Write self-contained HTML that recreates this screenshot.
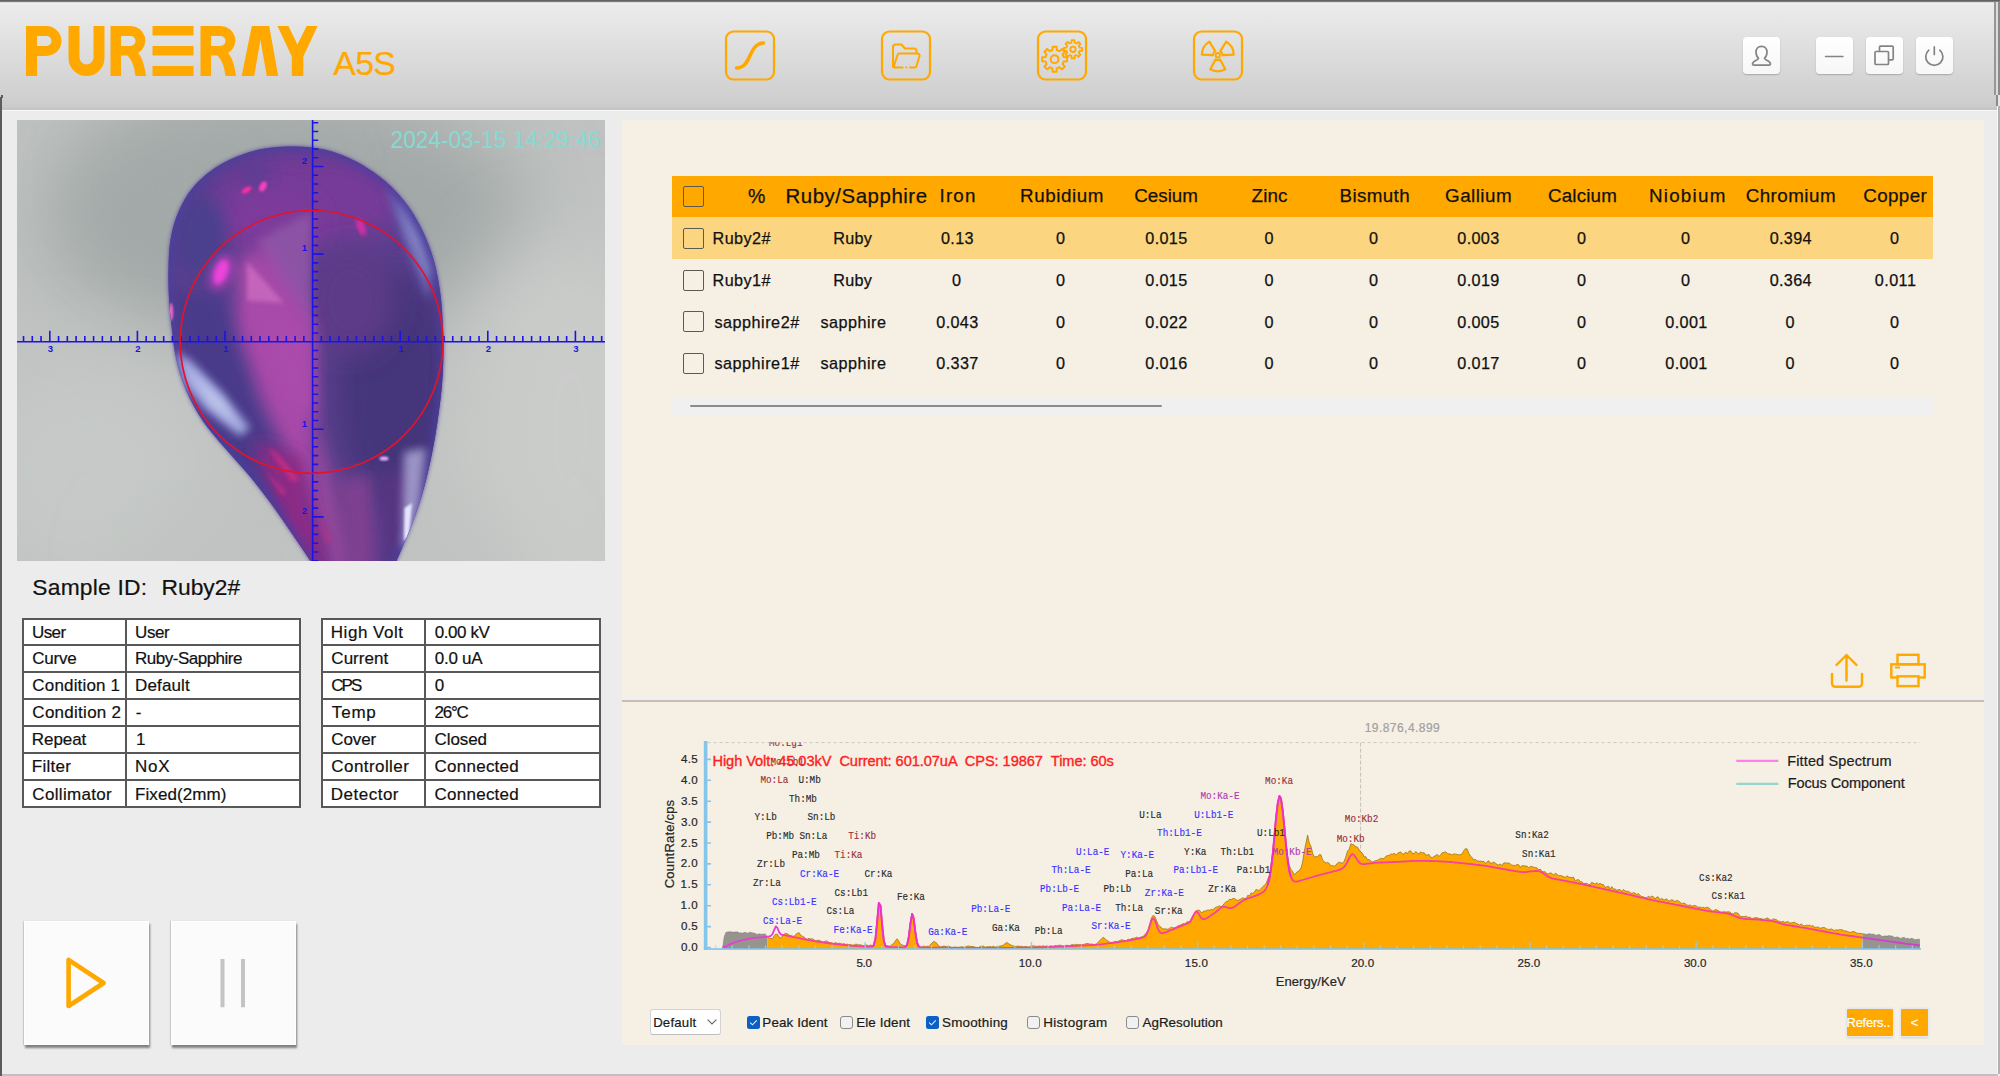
<!DOCTYPE html>
<html><head><meta charset="utf-8"><title>PureRay A5S</title>
<style>
*{box-sizing:border-box;margin:0;padding:0}
html,body{width:2000px;height:1076px;overflow:hidden}
body{position:relative;background:#ececec;font-family:"Liberation Sans",sans-serif;color:#111}
.abs{position:absolute}
.t{position:absolute;white-space:nowrap;line-height:1;-webkit-text-stroke:0.2px}
svg{position:absolute;overflow:visible}
</style></head>
<body>
<div class="abs" style="left:0;top:0;width:2000px;height:110px;background:linear-gradient(#ececec 0px,#e8e8e8 16px,#cecece 102px,#cbcbcb 107px,#c5c5c5 108.5px,#c8c8c8 110px)"></div>
<div class="abs" style="left:2px;top:110px;width:1995px;height:1.3px;background:#f6f6f6"></div>
<div class="abs" style="left:0;top:0;width:2000px;height:4.6px;background:linear-gradient(#606060 0,#646464 1.2px,#a8a8a8 2px,#ececec 2.7px,#f1f1f1 3.4px,#eeeeee 4.6px)"></div>
<div class="abs" style="left:1994.2px;top:2px;width:1.6px;height:93px;background:#969696"></div>
<div class="abs" style="left:1995.8px;top:2px;width:2.3px;height:93px;background:#dcdcdc"></div>
<div class="abs" style="left:1998px;top:2px;width:2px;height:93px;background:#8a8a8a"></div>
<div class="abs" style="left:1995.9px;top:94.5px;width:1.7px;height:11.5px;background:#8c8c8c"></div>
<div class="abs" style="left:1997.6px;top:95px;width:2.4px;height:11px;background:#e6e6e6"></div>
<div class="abs" style="left:1997px;top:106px;width:1.4px;height:968px;background:#f7f7f7"></div>
<div class="abs" style="left:1998.3px;top:106px;width:1.7px;height:968px;background:#b2b2b2"></div>
<div class="abs" style="left:0;top:97px;width:1.8px;height:979px;background:#5c5c5c"></div>
<div class="abs" style="left:1px;top:95px;width:2px;height:2.5px;background:#5c5c5c"></div>
<div class="abs" style="left:1.8px;top:1073.8px;width:1996px;height:2.2px;background:#c0c0c0"></div>
<svg style="left:0;top:0" width="420" height="110" viewBox="0 0 420 110"><g fill="#ffa800"><path fill-rule="evenodd" d="M26 26 H46 A15.5 15 0 0 1 46 56 H37 V76 H26 Z M37 36 V46 H46.5 A5 5 0 0 0 46.5 36 Z"/><path d="M68.5 26 H79.5 V57.5 A7 7 0 0 0 93.5 57.5 V26 H104.5 V58 A18 18 0 0 1 68.5 58 Z"/><path fill-rule="evenodd" d="M110.5 26 H130.5 A15 14.5 0 0 1 138.0 53 Q143.5 58 146.0 76 H135.5 Q134.0 62 127.5 55.5 H121.0 V76 H110.5 Z M121.0 36 V46 H130.5 A5 5 0 0 0 130.5 36 Z"/><rect x="152.5" y="26" width="41" height="9.5"/><rect x="152.5" y="46" width="41" height="9.5"/><rect x="152.5" y="66" width="41" height="10"/><path fill-rule="evenodd" d="M200.5 26 H220.5 A15 14.5 0 0 1 228.0 53 Q233.5 58 236.0 76 H225.5 Q224.0 62 217.5 55.5 H211.0 V76 H200.5 Z M211.0 36 V46 H220.5 A5 5 0 0 0 220.5 36 Z"/><path d="M241.7 76 L251.8 26 H269.2 L278.2 76 H266.8 L260.4 40 L254.2 76 Z"/><path d="M277.5 26 H288.4 L297.4 44.5 L306.6 26 H317.6 L303.3 56.5 V76 H291.8 V56.5 Z"/></g></svg>
<div class="t" style="left:333.2px;top:46.6px;font-size:33.8px;letter-spacing:-0.6px;color:#ffa800">A5S</div>
<svg style="left:0;top:0" width="2000" height="110" viewBox="0 0 2000 110"><rect x="726" y="31.5" width="48" height="48" rx="7.5" fill="none" stroke="#ffa800" stroke-width="2.2"/><rect x="882" y="31.5" width="48" height="48" rx="7.5" fill="none" stroke="#ffa800" stroke-width="2.2"/><rect x="1038" y="31.5" width="48" height="48" rx="7.5" fill="none" stroke="#ffa800" stroke-width="2.2"/><rect x="1194" y="31.5" width="48" height="48" rx="7.5" fill="none" stroke="#ffa800" stroke-width="2.2"/><path d="M736.5 68 C752 68 748 43.5 763.5 43" fill="none" stroke="#ffa800" stroke-width="3.6" stroke-linecap="round"/><path d="M893 67.5 V47 A2.5 2.5 0 0 1 895.5 44.5 H901.5 L905 48.5 H914 A2.5 2.5 0 0 1 916.5 51 V53.5" fill="none" stroke="#ffa800" stroke-width="2" stroke-linejoin="round"/><path d="M893.5 67.5 L897.5 55 A2 2 0 0 1 899.5 53.5 H917.5 A2 2 0 0 1 919.5 56 L916.5 66 A2 2 0 0 1 914.5 67.5 H910 M902.5 67.5 H896 A3 3 0 0 1 893 65" fill="none" stroke="#ffa800" stroke-width="2" stroke-linejoin="round" stroke-linecap="round"/><circle cx="906.3" cy="67.5" r="1" fill="#ffa800"/><path d="M1063.74 57.01 L1067.04 57.23 L1067.04 61.17 L1063.74 61.39 L1062.61 64.11 L1064.79 66.61 L1062.01 69.39 L1059.51 67.21 L1056.79 68.34 L1056.57 71.64 L1052.63 71.64 L1052.41 68.34 L1049.69 67.21 L1047.19 69.39 L1044.41 66.61 L1046.59 64.11 L1045.46 61.39 L1042.16 61.17 L1042.16 57.23 L1045.46 57.01 L1046.59 54.29 L1044.41 51.79 L1047.19 49.01 L1049.69 51.19 L1052.41 50.06 L1052.63 46.76 L1056.57 46.76 L1056.79 50.06 L1059.51 51.19 L1062.01 49.01 L1064.79 51.79 L1062.61 54.29Z" fill="none" stroke="#ffa800" stroke-width="2.0" stroke-linejoin="round"/><circle cx="1054.60" cy="59.20" r="3.90" fill="none" stroke="#ffa800" stroke-width="2.0"/><path d="M1079.61 47.71 L1082.09 47.86 L1082.09 50.74 L1079.61 50.89 L1078.80 52.85 L1080.44 54.71 L1078.41 56.74 L1076.55 55.10 L1074.59 55.91 L1074.44 58.39 L1071.56 58.39 L1071.41 55.91 L1069.45 55.10 L1067.59 56.74 L1065.56 54.71 L1067.20 52.85 L1066.39 50.89 L1063.91 50.74 L1063.91 47.86 L1066.39 47.71 L1067.20 45.75 L1065.56 43.89 L1067.59 41.86 L1069.45 43.50 L1071.41 42.69 L1071.56 40.21 L1074.44 40.21 L1074.59 42.69 L1076.55 43.50 L1078.41 41.86 L1080.44 43.89 L1078.80 45.75Z" fill="none" stroke="#ffa800" stroke-width="1.8" stroke-linejoin="round"/><circle cx="1073.00" cy="49.30" r="2.70" fill="none" stroke="#ffa800" stroke-width="1.8"/><path d="M1213.00 55.03 L1201.81 54.64 A16.00 16.00 0 0 1 1209.32 41.63 L1215.26 51.13 A4.80 4.80 0 0 0 1213.00 55.03 Z" fill="none" stroke="#ffa800" stroke-width="2.2" stroke-linejoin="round"/><path d="M1220.34 51.13 L1226.28 41.63 A16.00 16.00 0 0 1 1233.79 54.64 L1222.60 55.03 A4.80 4.80 0 0 0 1220.34 51.13 Z" fill="none" stroke="#ffa800" stroke-width="2.2" stroke-linejoin="round"/><path d="M1220.05 59.44 L1225.31 69.33 A16.00 16.00 0 0 1 1210.29 69.33 L1215.55 59.44 A4.80 4.80 0 0 0 1220.05 59.44 Z" fill="none" stroke="#ffa800" stroke-width="2.2" stroke-linejoin="round"/><circle cx="1217.8" cy="55.2" r="2.2" fill="none" stroke="#ffa800" stroke-width="1.9"/></svg>
<div class="abs" style="left:1742.7px;top:37.3px;width:37px;height:37px;border-radius:4px;background:linear-gradient(#ffffff,#f7f7f7);box-shadow:0 1px 1.5px rgba(0,0,0,0.22)"></div>
<div class="abs" style="left:1815.7px;top:37.3px;width:37px;height:37px;border-radius:4px;background:linear-gradient(#ffffff,#f7f7f7);box-shadow:0 1px 1.5px rgba(0,0,0,0.22)"></div>
<div class="abs" style="left:1865.7px;top:37.3px;width:37px;height:37px;border-radius:4px;background:linear-gradient(#ffffff,#f7f7f7);box-shadow:0 1px 1.5px rgba(0,0,0,0.22)"></div>
<div class="abs" style="left:1915.7px;top:37.3px;width:37px;height:37px;border-radius:4px;background:linear-gradient(#ffffff,#f7f7f7);box-shadow:0 1px 1.5px rgba(0,0,0,0.22)"></div>
<svg style="left:0;top:0" width="2000" height="110" viewBox="0 0 2000 110" fill="none" stroke="#848484" stroke-width="1.7" stroke-linecap="round" stroke-linejoin="round"><path d="M1761.5 46.3 C1765.2 46.3 1767 49 1767 52 C1767 55 1765.8 57.2 1764.4 58.3 C1764.4 60.2 1770.5 60.6 1770.5 64 Q1770.5 65.2 1769 65.2 H1754 Q1752.5 65.2 1752.5 64 C1752.5 60.6 1758.6 60.2 1758.6 58.3 C1757.2 57.2 1756 55 1756 52 C1756 49 1757.8 46.3 1761.5 46.3 Z"/><path d="M1825.5 56.4 H1843" stroke-width="1.5"/><rect x="1875" y="51.5" width="13.5" height="13" rx="1"/><path d="M1879.5 51 V47.2 Q1879.5 46.2 1880.5 46.2 H1892.2 Q1893.2 46.2 1893.2 47.2 V58.8 Q1893.2 59.8 1892.2 59.8 H1889"/><path d="M1934.3 46.9 V54.4"/><path d="M1928.8 50.2 A8.6 8.6 0 1 0 1939.8 50.2"/></svg>
<svg style="left:17px;top:120px;overflow:hidden" width="588" height="441" viewBox="17 120 588 441"><defs>
<filter id="b1" x="-20%" y="-20%" width="140%" height="140%"><feGaussianBlur stdDeviation="1.2"/></filter>
<filter id="b2" x="-20%" y="-20%" width="140%" height="140%"><feGaussianBlur stdDeviation="2.2"/></filter>
<filter id="b4" x="-30%" y="-30%" width="160%" height="160%"><feGaussianBlur stdDeviation="4"/></filter>
<filter id="b8" x="-40%" y="-40%" width="180%" height="180%"><feGaussianBlur stdDeviation="8"/></filter>
<filter id="b14" x="-50%" y="-50%" width="200%" height="200%"><feGaussianBlur stdDeviation="14"/></filter>
<filter id="b40" x="-60%" y="-60%" width="220%" height="220%"><feGaussianBlur stdDeviation="40"/></filter>
<linearGradient id="gbg" x1="0" y1="0" x2="1" y2="1">
<stop offset="0" stop-color="#a7acab"/><stop offset="0.5" stop-color="#b6bab9"/><stop offset="1" stop-color="#c6c8c6"/></linearGradient>
<clipPath id="gemclip"><path id="gemp" d="M291.3 146.6 C302.9 146.4 313.4 147.2 324.0 149.6 C334.6 152.0 344.8 155.8 355.0 161.0 C365.2 166.2 376.2 173.5 385.0 181.0 C393.8 188.5 401.5 197.2 408.0 206.0 C414.5 214.8 419.6 224.5 424.0 234.0 C428.4 243.5 431.8 252.8 434.5 263.0 C437.2 273.2 439.1 283.8 440.5 295.0 C441.9 306.2 442.6 318.8 443.0 330.0 C443.4 341.2 443.5 351.3 443.2 362.0 C442.9 372.7 442.3 382.0 441.0 394.0 C439.7 406.0 437.8 420.3 435.5 434.0 C433.2 447.7 430.2 462.8 427.0 476.0 C423.8 489.2 420.2 501.0 416.0 513.0 C411.8 525.0 406.2 537.8 402.0 548.0 C397.8 558.2 393.7 567.0 391.0 574.0 C388.3 581.0 396.2 587.3 386.0 590.0 C375.8 592.7 341.0 592.7 330.0 590.0 C319.0 587.3 323.3 579.0 320.0 574.0 C316.7 569.0 314.8 567.0 310.0 560.0 C305.2 553.0 297.7 541.7 291.0 532.0 C284.3 522.3 277.2 511.7 270.0 502.0 C262.8 492.3 255.5 483.0 248.0 474.0 C240.5 465.0 232.5 456.8 225.0 448.0 C217.5 439.2 209.4 430.5 203.0 421.0 C196.6 411.5 190.9 401.2 186.5 391.0 C182.1 380.8 178.9 370.2 176.5 360.0 C174.1 349.8 173.2 340.3 172.0 330.0 C170.8 319.7 169.6 308.3 169.0 298.0 C168.4 287.7 168.2 277.7 168.5 268.0 C168.8 258.3 168.9 249.2 170.5 240.0 C172.1 230.8 174.2 221.8 178.0 213.0 C181.8 204.2 186.2 195.4 193.0 187.5 C199.8 179.6 208.8 171.6 219.0 165.5 C229.2 159.4 242.4 153.8 254.5 150.7 C266.6 147.5 279.7 146.8 291.3 146.6Z"/></clipPath>
</defs><rect x="17" y="120" width="588" height="441" fill="#bfc2c0"/><ellipse cx="285" cy="215" rx="240" ry="125" fill="#a2a8a7" filter="url(#b40)"/><ellipse cx="200" cy="190" rx="110" ry="70" fill="#a4aaa9" filter="url(#b40)" opacity="0.6"/><ellipse cx="85" cy="470" rx="120" ry="110" fill="#c6c9c7" filter="url(#b40)"/><ellipse cx="570" cy="430" rx="110" ry="190" fill="#caccca" filter="url(#b40)"/><ellipse cx="330" cy="560" rx="200" ry="40" fill="#c0c3c1" filter="url(#b40)"/><use href="#gemp" fill="#5646a0" filter="url(#b2)"/><g clip-path="url(#gemclip)"><rect x="150" y="130" width="320" height="450" fill="#5a3f8e"/><ellipse cx="310" cy="200" rx="95" ry="48" fill="#763a98" filter="url(#b14)"/><ellipse cx="270" cy="225" rx="50" ry="30" fill="#7e3b9b" filter="url(#b14)"/><ellipse cx="255" cy="175" rx="14" ry="9" fill="#4f3f90" filter="url(#b8)" opacity="0.8"/><ellipse cx="200" cy="238" rx="26" ry="40" fill="#4b3f8d" filter="url(#b8)"/><ellipse cx="395" cy="390" rx="58" ry="120" fill="#45347a" filter="url(#b14)"/><ellipse cx="350" cy="300" rx="45" ry="55" fill="#5d3b88" filter="url(#b14)"/><path d="M385 185 L412 212 L436 270 L428 300 L404 240 Z" fill="#6a62b4" filter="url(#b4)"/><path d="M396 200 L420 236 L432 272 L426 276 L408 236 Z" fill="#8b90c6" filter="url(#b4)" opacity="0.8"/><path d="M170 290 L222 296 L262 420 L312 520 L325 572 L300 572 L200 420 Z" fill="#4a3a8a" filter="url(#b8)"/><path d="M258 240 L311 212 L312 334 L282 306 Z" fill="#8c52a4" filter="url(#b4)"/><path d="M236 262 L262 246 L312 320 L314 440 L322 540 L296 470 L262 400 L238 330 Z" fill="#a748a8" filter="url(#b8)"/><path d="M247 262 L284 303 L247 301 Z" fill="#c465bb" filter="url(#b2)"/><path d="M250 305 L312 330 L314 420 L285 400 Z" fill="#aa4cac" filter="url(#b8)"/><path d="M314 420 L330 470 L352 540 L360 572 L330 572 L312 500 Z" fill="#94489c" filter="url(#b8)"/><path d="M252 440 L300 455 L330 572 L300 572 Z" fill="#8c2c86" filter="url(#b8)"/><path d="M335 480 L372 474 L378 572 L345 572 Z" fill="#7e4090" filter="url(#b8)"/><path d="M380 470 L420 470 L400 572 L382 572 Z" fill="#573582" filter="url(#b8)"/><path d="M268 448 L276 452 L300 480 L292 482 Z" fill="#d02f86" filter="url(#b2)" opacity="0.8"/><path d="M264 470 L286 492 L282 496 Z" fill="#d02f86" filter="url(#b2)" opacity="0.7"/><path d="M318 515 L332 540 L326 544 Z" fill="#c02f86" filter="url(#b2)" opacity="0.6"/><use href="#gemp" fill="none" stroke="#4a40a2" stroke-width="8" filter="url(#b4)" opacity="0.8"/><ellipse cx="221" cy="272" rx="6" ry="12.5" fill="#ff4aea" transform="rotate(20 221 272)" filter="url(#b2)"/><ellipse cx="221" cy="272" rx="11" ry="19" fill="#e040d0" transform="rotate(20 221 272)" filter="url(#b4)" opacity="0.55"/><ellipse cx="246.5" cy="190" rx="5.5" ry="2.6" fill="#ff2ea4" transform="rotate(-32 246.5 190)" filter="url(#b1)"/><ellipse cx="263" cy="186.5" rx="3.2" ry="5.5" fill="#f840c0" transform="rotate(28 263 186.5)" filter="url(#b1)"/><ellipse cx="361" cy="227" rx="3.5" ry="9" fill="#e62ca8" transform="rotate(-22 361 227)" filter="url(#b2)"/><ellipse cx="384" cy="458.5" rx="4.5" ry="2" fill="#e6b4ff" filter="url(#b1)"/><ellipse cx="171" cy="312" rx="2.2" ry="9" fill="#ff70c8" filter="url(#b1)" opacity="0.9"/><path d="M175 352 L190 360 L222 392 L250 428 L240 436 L206 410 L184 384 Z" fill="#b2bcf0" filter="url(#b4)" opacity="0.85"/><path d="M186 366 L224 402 L238 426 L210 404 Z" fill="#d4def0" filter="url(#b4)" opacity="0.55"/><path d="M404 452 L426 448 L420 500 L410 545 L402 548 Z" fill="#a9a4d2" filter="url(#b4)" opacity="0.85"/><path d="M404.5 508 L412 503 L409 536 L404 541 Z" fill="#e4e4ff" filter="url(#b1)"/></g><path d="M17 341.7 H605 M312.6 120 V561 M23.52 341.7 v-5.6 M32.28 341.7 v-5.6 M41.04 341.7 v-5.6 M49.80 341.7 v-11 M58.56 341.7 v-5.6 M67.32 341.7 v-5.6 M76.08 341.7 v-5.6 M84.84 341.7 v-5.6 M93.60 341.7 v-5.6 M102.36 341.7 v-5.6 M111.12 341.7 v-5.6 M119.88 341.7 v-5.6 M128.64 341.7 v-5.6 M137.40 341.7 v-11 M146.16 341.7 v-5.6 M154.92 341.7 v-5.6 M163.68 341.7 v-5.6 M172.44 341.7 v-5.6 M181.20 341.7 v-5.6 M189.96 341.7 v-5.6 M198.72 341.7 v-5.6 M207.48 341.7 v-5.6 M216.24 341.7 v-5.6 M225.00 341.7 v-11 M233.76 341.7 v-5.6 M242.52 341.7 v-5.6 M251.28 341.7 v-5.6 M260.04 341.7 v-5.6 M268.80 341.7 v-5.6 M277.56 341.7 v-5.6 M286.32 341.7 v-5.6 M295.08 341.7 v-5.6 M303.84 341.7 v-5.6 M321.36 341.7 v-5.6 M330.12 341.7 v-5.6 M338.88 341.7 v-5.6 M347.64 341.7 v-5.6 M356.40 341.7 v-5.6 M365.16 341.7 v-5.6 M373.92 341.7 v-5.6 M382.68 341.7 v-5.6 M391.44 341.7 v-5.6 M400.20 341.7 v-11 M408.96 341.7 v-5.6 M417.72 341.7 v-5.6 M426.48 341.7 v-5.6 M435.24 341.7 v-5.6 M444.00 341.7 v-5.6 M452.76 341.7 v-5.6 M461.52 341.7 v-5.6 M470.28 341.7 v-5.6 M479.04 341.7 v-5.6 M487.80 341.7 v-11 M496.56 341.7 v-5.6 M505.32 341.7 v-5.6 M514.08 341.7 v-5.6 M522.84 341.7 v-5.6 M531.60 341.7 v-5.6 M540.36 341.7 v-5.6 M549.12 341.7 v-5.6 M557.88 341.7 v-5.6 M566.64 341.7 v-5.6 M575.40 341.7 v-11 M584.16 341.7 v-5.6 M592.92 341.7 v-5.6 M601.68 341.7 v-5.6 M312.6 122.70 h5.6 M312.6 131.46 h5.6 M312.6 140.22 h5.6 M312.6 148.98 h5.6 M312.6 157.74 h5.6 M312.6 166.50 h11 M312.6 175.26 h5.6 M312.6 184.02 h5.6 M312.6 192.78 h5.6 M312.6 201.54 h5.6 M312.6 210.30 h5.6 M312.6 219.06 h5.6 M312.6 227.82 h5.6 M312.6 236.58 h5.6 M312.6 245.34 h5.6 M312.6 254.10 h11 M312.6 262.86 h5.6 M312.6 271.62 h5.6 M312.6 280.38 h5.6 M312.6 289.14 h5.6 M312.6 297.90 h5.6 M312.6 306.66 h5.6 M312.6 315.42 h5.6 M312.6 324.18 h5.6 M312.6 332.94 h5.6 M312.6 350.46 h5.6 M312.6 359.22 h5.6 M312.6 367.98 h5.6 M312.6 376.74 h5.6 M312.6 385.50 h5.6 M312.6 394.26 h5.6 M312.6 403.02 h5.6 M312.6 411.78 h5.6 M312.6 420.54 h5.6 M312.6 429.30 h11 M312.6 438.06 h5.6 M312.6 446.82 h5.6 M312.6 455.58 h5.6 M312.6 464.34 h5.6 M312.6 473.10 h5.6 M312.6 481.86 h5.6 M312.6 490.62 h5.6 M312.6 499.38 h5.6 M312.6 508.14 h5.6 M312.6 516.90 h11 M312.6 525.66 h5.6 M312.6 534.42 h5.6 M312.6 543.18 h5.6 M312.6 551.94 h5.6 M312.6 560.70 h5.6" stroke="#1a14e4" stroke-width="1.6" fill="none"/><text x="50.4" y="351.6" font-size="9.6" font-weight="bold" fill="#1a14e4" text-anchor="middle" font-family="Liberation Sans">3</text><text x="138.0" y="351.6" font-size="9.6" font-weight="bold" fill="#1a14e4" text-anchor="middle" font-family="Liberation Sans">2</text><text x="225.6" y="351.6" font-size="9.6" font-weight="bold" fill="#1a14e4" text-anchor="middle" font-family="Liberation Sans">1</text><text x="400.8" y="351.6" font-size="9.6" font-weight="bold" fill="#1a14e4" text-anchor="middle" font-family="Liberation Sans">1</text><text x="488.4" y="351.6" font-size="9.6" font-weight="bold" fill="#1a14e4" text-anchor="middle" font-family="Liberation Sans">2</text><text x="576.0" y="351.6" font-size="9.6" font-weight="bold" fill="#1a14e4" text-anchor="middle" font-family="Liberation Sans">3</text><text x="304.5" y="163.7" font-size="9.6" font-weight="bold" fill="#1a14e4" text-anchor="middle" font-family="Liberation Sans">2</text><text x="304.5" y="251.3" font-size="9.6" font-weight="bold" fill="#1a14e4" text-anchor="middle" font-family="Liberation Sans">1</text><text x="304.5" y="426.5" font-size="9.6" font-weight="bold" fill="#1a14e4" text-anchor="middle" font-family="Liberation Sans">1</text><text x="304.5" y="514.1" font-size="9.6" font-weight="bold" fill="#1a14e4" text-anchor="middle" font-family="Liberation Sans">2</text><circle cx="311.6" cy="341.9" r="131.4" fill="none" stroke="#e2142c" stroke-width="1.7"/><text x="390.6" y="147.9" font-size="23.6" fill="#86dad2" font-family="Liberation Sans" textLength="210" lengthAdjust="spacingAndGlyphs">2024-03-15 14:29:46</text></svg>
<div class="t" style="left:32.37px;top:574.00px;font-size:22.8px;letter-spacing:0.213px;line-height:26px;">Sample ID:</div>
<div class="t" style="left:161.38px;top:574.00px;font-size:22.8px;letter-spacing:0.056px;line-height:26px;">Ruby2#</div>
<div class="abs" style="left:22.2px;top:618.9px;width:279px;height:188.2px;background:#fff"></div>
<div class="abs" style="left:22.2px;top:617.90px;width:279.0px;height:2px;background:#585858"></div>
<div class="abs" style="left:22.2px;top:643.80px;width:279.0px;height:2px;background:#585858"></div>
<div class="abs" style="left:22.2px;top:670.70px;width:279.0px;height:2px;background:#585858"></div>
<div class="abs" style="left:22.2px;top:697.50px;width:279.0px;height:2px;background:#585858"></div>
<div class="abs" style="left:22.2px;top:724.50px;width:279.0px;height:2px;background:#585858"></div>
<div class="abs" style="left:22.2px;top:751.50px;width:279.0px;height:2px;background:#585858"></div>
<div class="abs" style="left:22.2px;top:778.70px;width:279.0px;height:2px;background:#585858"></div>
<div class="abs" style="left:22.2px;top:806.10px;width:279.0px;height:2px;background:#585858"></div>
<div class="abs" style="left:22.20px;top:617.90px;width:2px;height:190.20px;background:#585858"></div>
<div class="abs" style="left:124.70px;top:617.90px;width:2px;height:190.20px;background:#585858"></div>
<div class="abs" style="left:299.20px;top:617.90px;width:2px;height:190.20px;background:#585858"></div>
<div class="t" style="left:31.93px;top:623.00px;font-size:17px;letter-spacing:-0.542px;line-height:19px;">User</div>
<div class="t" style="left:135.12px;top:623.00px;font-size:17px;letter-spacing:-0.408px;line-height:19px;">User</div>
<div class="t" style="left:32.35px;top:649.00px;font-size:17px;letter-spacing:-0.269px;line-height:19px;">Curve</div>
<div class="t" style="left:135.04px;top:649.00px;font-size:17px;letter-spacing:-0.496px;line-height:19px;">Ruby-Sapphire</div>
<div class="t" style="left:32.35px;top:676.00px;font-size:17px;letter-spacing:0.169px;line-height:19px;">Condition 1</div>
<div class="t" style="left:135.04px;top:676.00px;font-size:17px;letter-spacing:0.142px;line-height:19px;">Default</div>
<div class="t" style="left:32.35px;top:703.00px;font-size:17px;letter-spacing:0.269px;line-height:19px;">Condition 2</div>
<div class="t" style="left:135.72px;top:703.00px;font-size:17px;line-height:19px;">-</div>
<div class="t" style="left:31.84px;top:730.00px;font-size:17px;letter-spacing:-0.076px;line-height:19px;">Repeat</div>
<div class="t" style="left:136.12px;top:730.00px;font-size:17px;line-height:19px;">1</div>
<div class="t" style="left:31.84px;top:757.00px;font-size:17px;letter-spacing:0.258px;line-height:19px;">Filter</div>
<div class="t" style="left:135.04px;top:757.00px;font-size:17px;letter-spacing:0.725px;line-height:19px;">NoX</div>
<div class="t" style="left:32.35px;top:785.00px;font-size:17px;letter-spacing:0.324px;line-height:19px;">Collimator</div>
<div class="t" style="left:135.04px;top:785.00px;font-size:17px;letter-spacing:0.076px;line-height:19px;">Fixed(2mm)</div>
<div class="abs" style="left:321.2px;top:618.9px;width:280px;height:188.2px;background:#fff"></div>
<div class="abs" style="left:321.2px;top:617.90px;width:280.0px;height:2px;background:#585858"></div>
<div class="abs" style="left:321.2px;top:643.80px;width:280.0px;height:2px;background:#585858"></div>
<div class="abs" style="left:321.2px;top:670.70px;width:280.0px;height:2px;background:#585858"></div>
<div class="abs" style="left:321.2px;top:697.50px;width:280.0px;height:2px;background:#585858"></div>
<div class="abs" style="left:321.2px;top:724.50px;width:280.0px;height:2px;background:#585858"></div>
<div class="abs" style="left:321.2px;top:751.50px;width:280.0px;height:2px;background:#585858"></div>
<div class="abs" style="left:321.2px;top:778.70px;width:280.0px;height:2px;background:#585858"></div>
<div class="abs" style="left:321.2px;top:806.10px;width:280.0px;height:2px;background:#585858"></div>
<div class="abs" style="left:321.20px;top:617.90px;width:2px;height:190.20px;background:#585858"></div>
<div class="abs" style="left:423.70px;top:617.90px;width:2px;height:190.20px;background:#585858"></div>
<div class="abs" style="left:599.20px;top:617.90px;width:2px;height:190.20px;background:#585858"></div>
<div class="t" style="left:330.84px;top:623.00px;font-size:17px;letter-spacing:0.520px;line-height:19px;">High Volt</div>
<div class="t" style="left:434.80px;top:623.00px;font-size:17px;letter-spacing:-0.439px;line-height:19px;">0.00 kV</div>
<div class="t" style="left:331.35px;top:649.00px;font-size:17px;letter-spacing:0.023px;line-height:19px;">Current</div>
<div class="t" style="left:434.80px;top:649.00px;font-size:17px;letter-spacing:-0.267px;line-height:19px;">0.0 uA</div>
<div class="t" style="left:331.35px;top:676.00px;font-size:17px;letter-spacing:-2.000px;line-height:19px;">CPS</div>
<div class="t" style="left:434.80px;top:676.00px;font-size:17px;line-height:19px;">0</div>
<div class="t" style="left:331.86px;top:703.00px;font-size:17px;letter-spacing:0.785px;line-height:19px;">Temp</div>
<div class="t" style="left:434.55px;top:703.00px;font-size:17px;letter-spacing:-1.255px;line-height:19px;">26°C</div>
<div class="t" style="left:331.35px;top:730.00px;font-size:17px;letter-spacing:-0.121px;line-height:19px;">Cover</div>
<div class="t" style="left:434.55px;top:730.00px;font-size:17px;letter-spacing:-0.080px;line-height:19px;">Closed</div>
<div class="t" style="left:331.35px;top:757.00px;font-size:17px;letter-spacing:0.423px;line-height:19px;">Controller</div>
<div class="t" style="left:434.55px;top:757.00px;font-size:17px;letter-spacing:0.247px;line-height:19px;">Connected</div>
<div class="t" style="left:330.84px;top:785.00px;font-size:17px;letter-spacing:0.494px;line-height:19px;">Detector</div>
<div class="t" style="left:434.55px;top:785.00px;font-size:17px;letter-spacing:0.247px;line-height:19px;">Connected</div>
<div class="abs" style="left:23.8px;top:921px;width:125px;height:124.3px;background:#fbfbfb;border:1px solid #fff;box-shadow:1px 2.5px 2px rgba(0,0,0,0.45), -1px 0 1px rgba(0,0,0,0.12)"></div>
<div class="abs" style="left:170.8px;top:921px;width:125px;height:124.3px;background:#fbfbfb;border:1px solid #fff;box-shadow:1px 2.5px 2px rgba(0,0,0,0.45), -1px 0 1px rgba(0,0,0,0.12)"></div>
<svg style="left:0;top:900px" width="320" height="160" viewBox="0 900 320 160"><path d="M68.6 959.8 L68.6 1006 L103.6 983 Z" fill="none" stroke="#ffa800" stroke-width="4.6" stroke-linejoin="round"/><path d="M222.5 959 V1007.2 M243 959 V1007.2" stroke="#c4c4c4" stroke-width="4" fill="none"/></svg>
<div class="abs" style="left:621.5px;top:120.2px;width:1362.5px;height:925px;background:#f5efe4"></div>
<div class="abs" style="left:672px;top:175.6px;width:1261px;height:41.4px;background:#ffa800"></div>
<div class="abs" style="left:672px;top:217px;width:1261px;height:41.8px;background:#fbd57f"></div>
<div class="abs" style="left:683px;top:185.6px;width:21px;height:21px;border-radius:2px;border:1.4px solid #5c5a52"></div>
<div class="abs" style="left:683px;top:228.0px;width:21px;height:21px;border-radius:2px;border:1.4px solid #5c5a52"></div>
<div class="abs" style="left:683px;top:269.7px;width:21px;height:21px;border-radius:2px;border:1.4px solid #5c5a52"></div>
<div class="abs" style="left:683px;top:311.2px;width:21px;height:21px;border-radius:2px;border:1.4px solid #5c5a52"></div>
<div class="abs" style="left:683px;top:352.8px;width:21px;height:21px;border-radius:2px;border:1.4px solid #5c5a52"></div>
<div class="t" style="left:748.12px;top:185.00px;font-size:19.5px;line-height:22px;-webkit-text-stroke:0.25px;">%</div>
<div class="t" style="left:785.57px;top:185.00px;font-size:20.4px;letter-spacing:0.550px;line-height:22px;-webkit-text-stroke:0.25px;">Ruby/Sapphire</div>
<div class="t" style="left:939.61px;top:185.00px;font-size:18.8px;letter-spacing:1.128px;line-height:21px;-webkit-text-stroke:0.25px;">Iron</div>
<div class="t" style="left:1020.00px;top:185.00px;font-size:18.8px;letter-spacing:0.585px;line-height:21px;-webkit-text-stroke:0.25px;">Rubidium</div>
<div class="t" style="left:1134.26px;top:185.00px;font-size:18.8px;letter-spacing:0.006px;line-height:21px;-webkit-text-stroke:0.25px;">Cesium</div>
<div class="t" style="left:1251.54px;top:185.00px;font-size:18.8px;letter-spacing:0.167px;line-height:21px;-webkit-text-stroke:0.25px;">Zinc</div>
<div class="t" style="left:1339.50px;top:185.00px;font-size:18.8px;letter-spacing:0.377px;line-height:21px;-webkit-text-stroke:0.25px;">Bismuth</div>
<div class="t" style="left:1445.06px;top:185.00px;font-size:18.8px;letter-spacing:0.472px;line-height:21px;-webkit-text-stroke:0.25px;">Gallium</div>
<div class="t" style="left:1547.96px;top:185.00px;font-size:18.8px;letter-spacing:0.167px;line-height:21px;-webkit-text-stroke:0.25px;">Calcium</div>
<div class="t" style="left:1648.90px;top:185.00px;font-size:18.8px;letter-spacing:1.255px;line-height:21px;-webkit-text-stroke:0.25px;">Niobium</div>
<div class="t" style="left:1745.66px;top:185.00px;font-size:18.8px;letter-spacing:0.471px;line-height:21px;-webkit-text-stroke:0.25px;">Chromium</div>
<div class="t" style="left:1863.26px;top:185.00px;font-size:18.8px;letter-spacing:0.372px;line-height:21px;-webkit-text-stroke:0.25px;">Copper</div>
<div class="t" style="left:712.50px;top:229.00px;font-size:16.2px;letter-spacing:0.437px;line-height:18px;-webkit-text-stroke:0.25px;">Ruby2#</div>
<div class="t" style="left:833.20px;top:229.00px;font-size:16.2px;letter-spacing:0.323px;line-height:18px;-webkit-text-stroke:0.25px;">Ruby</div>
<div class="t" style="left:940.88px;top:229.00px;font-size:16.2px;letter-spacing:0.402px;line-height:18px;-webkit-text-stroke:0.25px;">0.13</div>
<div class="t" style="left:1056.08px;top:229.00px;font-size:16.2px;line-height:18px;-webkit-text-stroke:0.25px;">0</div>
<div class="t" style="left:1145.33px;top:229.00px;font-size:16.2px;letter-spacing:0.329px;line-height:18px;-webkit-text-stroke:0.25px;">0.015</div>
<div class="t" style="left:1264.58px;top:229.00px;font-size:16.2px;line-height:18px;-webkit-text-stroke:0.25px;">0</div>
<div class="t" style="left:1369.08px;top:229.00px;font-size:16.2px;line-height:18px;-webkit-text-stroke:0.25px;">0</div>
<div class="t" style="left:1457.33px;top:229.00px;font-size:16.2px;letter-spacing:0.329px;line-height:18px;-webkit-text-stroke:0.25px;">0.003</div>
<div class="t" style="left:1577.08px;top:229.00px;font-size:16.2px;line-height:18px;-webkit-text-stroke:0.25px;">0</div>
<div class="t" style="left:1681.08px;top:229.00px;font-size:16.2px;line-height:18px;-webkit-text-stroke:0.25px;">0</div>
<div class="t" style="left:1769.83px;top:229.00px;font-size:16.2px;letter-spacing:0.268px;line-height:18px;-webkit-text-stroke:0.25px;">0.394</div>
<div class="t" style="left:1890.08px;top:229.00px;font-size:16.2px;line-height:18px;-webkit-text-stroke:0.25px;">0</div>
<div class="t" style="left:712.50px;top:271.00px;font-size:16.2px;letter-spacing:0.437px;line-height:18px;-webkit-text-stroke:0.25px;">Ruby1#</div>
<div class="t" style="left:833.20px;top:271.00px;font-size:16.2px;letter-spacing:0.323px;line-height:18px;-webkit-text-stroke:0.25px;">Ruby</div>
<div class="t" style="left:952.08px;top:271.00px;font-size:16.2px;line-height:18px;-webkit-text-stroke:0.25px;">0</div>
<div class="t" style="left:1056.08px;top:271.00px;font-size:16.2px;line-height:18px;-webkit-text-stroke:0.25px;">0</div>
<div class="t" style="left:1145.33px;top:271.00px;font-size:16.2px;letter-spacing:0.329px;line-height:18px;-webkit-text-stroke:0.25px;">0.015</div>
<div class="t" style="left:1264.58px;top:271.00px;font-size:16.2px;line-height:18px;-webkit-text-stroke:0.25px;">0</div>
<div class="t" style="left:1369.08px;top:271.00px;font-size:16.2px;line-height:18px;-webkit-text-stroke:0.25px;">0</div>
<div class="t" style="left:1457.33px;top:271.00px;font-size:16.2px;letter-spacing:0.349px;line-height:18px;-webkit-text-stroke:0.25px;">0.019</div>
<div class="t" style="left:1577.08px;top:271.00px;font-size:16.2px;line-height:18px;-webkit-text-stroke:0.25px;">0</div>
<div class="t" style="left:1681.08px;top:271.00px;font-size:16.2px;line-height:18px;-webkit-text-stroke:0.25px;">0</div>
<div class="t" style="left:1769.83px;top:271.00px;font-size:16.2px;letter-spacing:0.268px;line-height:18px;-webkit-text-stroke:0.25px;">0.364</div>
<div class="t" style="left:1874.68px;top:271.00px;font-size:16.2px;letter-spacing:0.478px;line-height:18px;-webkit-text-stroke:0.25px;">0.011</div>
<div class="t" style="left:714.39px;top:313.00px;font-size:16.2px;letter-spacing:0.522px;line-height:18px;-webkit-text-stroke:0.25px;">sapphire2#</div>
<div class="t" style="left:820.50px;top:313.00px;font-size:16.2px;letter-spacing:0.475px;line-height:18px;-webkit-text-stroke:0.25px;">sapphire</div>
<div class="t" style="left:936.33px;top:313.00px;font-size:16.2px;letter-spacing:0.329px;line-height:18px;-webkit-text-stroke:0.25px;">0.043</div>
<div class="t" style="left:1056.08px;top:313.00px;font-size:16.2px;line-height:18px;-webkit-text-stroke:0.25px;">0</div>
<div class="t" style="left:1145.33px;top:313.00px;font-size:16.2px;letter-spacing:0.349px;line-height:18px;-webkit-text-stroke:0.25px;">0.022</div>
<div class="t" style="left:1264.58px;top:313.00px;font-size:16.2px;line-height:18px;-webkit-text-stroke:0.25px;">0</div>
<div class="t" style="left:1369.08px;top:313.00px;font-size:16.2px;line-height:18px;-webkit-text-stroke:0.25px;">0</div>
<div class="t" style="left:1457.33px;top:313.00px;font-size:16.2px;letter-spacing:0.329px;line-height:18px;-webkit-text-stroke:0.25px;">0.005</div>
<div class="t" style="left:1577.08px;top:313.00px;font-size:16.2px;line-height:18px;-webkit-text-stroke:0.25px;">0</div>
<div class="t" style="left:1665.33px;top:313.00px;font-size:16.2px;letter-spacing:0.349px;line-height:18px;-webkit-text-stroke:0.25px;">0.001</div>
<div class="t" style="left:1785.58px;top:313.00px;font-size:16.2px;line-height:18px;-webkit-text-stroke:0.25px;">0</div>
<div class="t" style="left:1890.08px;top:313.00px;font-size:16.2px;line-height:18px;-webkit-text-stroke:0.25px;">0</div>
<div class="t" style="left:714.39px;top:354.00px;font-size:16.2px;letter-spacing:0.522px;line-height:18px;-webkit-text-stroke:0.25px;">sapphire1#</div>
<div class="t" style="left:820.50px;top:354.00px;font-size:16.2px;letter-spacing:0.475px;line-height:18px;-webkit-text-stroke:0.25px;">sapphire</div>
<div class="t" style="left:936.33px;top:354.00px;font-size:16.2px;letter-spacing:0.349px;line-height:18px;-webkit-text-stroke:0.25px;">0.337</div>
<div class="t" style="left:1056.08px;top:354.00px;font-size:16.2px;line-height:18px;-webkit-text-stroke:0.25px;">0</div>
<div class="t" style="left:1145.33px;top:354.00px;font-size:16.2px;letter-spacing:0.329px;line-height:18px;-webkit-text-stroke:0.25px;">0.016</div>
<div class="t" style="left:1264.58px;top:354.00px;font-size:16.2px;line-height:18px;-webkit-text-stroke:0.25px;">0</div>
<div class="t" style="left:1369.08px;top:354.00px;font-size:16.2px;line-height:18px;-webkit-text-stroke:0.25px;">0</div>
<div class="t" style="left:1457.33px;top:354.00px;font-size:16.2px;letter-spacing:0.349px;line-height:18px;-webkit-text-stroke:0.25px;">0.017</div>
<div class="t" style="left:1577.08px;top:354.00px;font-size:16.2px;line-height:18px;-webkit-text-stroke:0.25px;">0</div>
<div class="t" style="left:1665.33px;top:354.00px;font-size:16.2px;letter-spacing:0.349px;line-height:18px;-webkit-text-stroke:0.25px;">0.001</div>
<div class="t" style="left:1785.58px;top:354.00px;font-size:16.2px;line-height:18px;-webkit-text-stroke:0.25px;">0</div>
<div class="t" style="left:1890.08px;top:354.00px;font-size:16.2px;line-height:18px;-webkit-text-stroke:0.25px;">0</div>
<div class="abs" style="left:672px;top:397px;width:1261px;height:17.5px;background:#f0f0f0"></div>
<div class="abs" style="left:690px;top:404.5px;width:472px;height:2.5px;background:#8c8c8c;border-radius:1px"></div>
<svg style="left:1800px;top:640px" width="160" height="60" viewBox="1800 640 160 60" fill="none" stroke="#ffa800" stroke-width="2.4"><path d="M1846.5 655 V680.5 M1836.5 665 L1846.5 655 L1856.5 665" stroke-linecap="round" stroke-linejoin="round"/><path d="M1832 674 V683 Q1832 686.8 1835.8 686.8 H1858.2 Q1862 686.8 1862 683 V674" stroke-linecap="round"/><rect x="1897.5" y="654.8" width="21" height="9.5"/><rect x="1891.3" y="664.3" width="33.4" height="13.2"/><rect x="1897.5" y="676.3" width="21" height="9.8" fill="#f5efe4"/><path d="M1895 667.5 H1900" stroke-width="2"/></svg>
<div class="abs" style="left:622px;top:695.8px;width:1362px;height:2.9px;background:#f1f0ee"></div>
<div class="abs" style="left:622px;top:699.7px;width:1362px;height:2.6px;background:#c7beb1"></div>
<svg style="left:0;top:700px;overflow:hidden" width="2000" height="376" viewBox="0 700 2000 376" font-family="Liberation Sans"><defs><clipPath id="plotclip"><rect x="705.6" y="742.3" width="1216.4" height="207.9"/></clipPath></defs><path d="M707.6 742.6 H1920" stroke="#cbc8c1" stroke-width="1" stroke-dasharray="3 3" fill="none"/><path d="M1360.6 742.6 V948.5" stroke="#c2bfb8" stroke-width="1" stroke-dasharray="4 2" fill="none"/><path d="M722.6 949.0 L722.6 948.5 L724.3 936.7 L725.9 932.5 L727.6 932.0 L729.2 931.9 L730.9 931.7 L732.6 932.3 L734.2 932.1 L735.9 932.0 L737.6 931.9 L739.2 932.9 L740.9 932.9 L742.5 933.3 L744.2 932.5 L745.9 932.5 L747.5 933.5 L749.2 932.5 L750.9 932.4 L752.5 932.9 L754.2 933.1 L755.8 933.9 L757.5 934.4 L759.2 933.8 L760.8 934.3 L762.5 934.2 L764.2 934.0 L765.8 934.3 L767.5 937.1 L767.5 949.0 Z" fill="#97948e"/><path d="M767.5 949.0 L767.5 937.1 L769.1 938.2 L770.8 938.5 L772.5 938.7 L774.1 935.9 L775.8 934.0 L777.4 934.2 L779.1 937.1 L780.8 938.2 L782.4 935.9 L784.1 934.1 L785.8 933.3 L787.4 933.9 L789.1 935.0 L790.7 935.7 L792.4 936.0 L794.1 936.4 L795.7 934.4 L797.4 933.3 L799.1 932.7 L800.7 935.3 L802.4 936.2 L804.0 937.0 L805.7 938.8 L807.4 939.2 L809.0 938.3 L810.7 939.1 L812.3 938.7 L814.0 939.8 L815.7 940.8 L817.3 940.4 L819.0 940.2 L820.7 941.1 L822.3 941.8 L824.0 941.8 L825.6 940.9 L827.3 941.2 L829.0 942.5 L830.6 942.7 L832.3 943.2 L834.0 943.5 L835.6 942.6 L837.3 943.5 L838.9 943.2 L840.6 943.5 L842.3 944.1 L843.9 943.6 L845.6 944.5 L847.3 944.1 L848.9 944.8 L850.6 944.7 L852.2 945.0 L853.9 945.1 L855.6 944.2 L857.2 944.3 L858.9 945.1 L860.5 944.6 L862.2 945.5 L863.9 945.5 L865.5 944.9 L867.2 945.1 L868.9 945.9 L870.5 944.9 L872.2 945.6 L873.8 944.4 L875.5 936.8 L877.2 920.2 L878.8 902.5 L880.5 905.8 L882.2 925.4 L883.8 939.7 L885.5 945.2 L887.1 945.7 L888.8 946.0 L890.5 945.9 L892.1 944.6 L893.8 943.4 L895.4 940.7 L897.1 938.8 L898.8 941.2 L900.4 944.2 L902.1 945.0 L903.8 945.4 L905.4 946.0 L907.1 944.2 L908.7 936.0 L910.4 921.7 L912.1 913.3 L913.7 916.5 L915.4 930.5 L917.1 941.3 L918.7 945.5 L920.4 946.8 L922.0 947.1 L923.7 945.9 L925.4 946.7 L927.0 946.2 L928.7 946.5 L930.4 944.9 L932.0 943.0 L933.7 941.5 L935.3 942.1 L937.0 943.5 L938.7 946.1 L940.3 946.9 L942.0 946.6 L943.6 946.1 L945.3 946.3 L947.0 946.8 L948.6 946.1 L950.3 946.9 L952.0 947.4 L953.6 947.2 L955.3 946.9 L956.9 947.3 L958.6 947.3 L960.3 947.0 L961.9 946.7 L963.6 947.2 L965.3 947.1 L966.9 946.3 L968.6 946.0 L970.2 946.4 L971.9 946.4 L973.6 946.6 L975.2 947.2 L976.9 947.5 L978.5 947.6 L980.2 946.4 L981.9 946.4 L983.5 946.1 L985.2 947.3 L986.9 946.7 L988.5 946.8 L990.2 946.5 L991.8 947.0 L993.5 946.2 L995.2 947.2 L996.8 946.8 L998.5 946.5 L1000.2 946.0 L1001.8 945.8 L1003.5 945.0 L1005.1 943.6 L1006.8 942.5 L1008.5 943.6 L1010.1 944.6 L1011.8 945.4 L1013.5 945.9 L1015.1 946.6 L1016.8 946.3 L1018.4 946.1 L1020.1 946.4 L1021.8 946.4 L1023.4 946.8 L1025.1 946.6 L1026.7 946.5 L1028.4 947.2 L1030.1 946.6 L1031.7 945.9 L1033.4 945.9 L1035.1 946.0 L1036.7 946.5 L1038.4 946.1 L1040.0 946.1 L1041.7 946.3 L1043.4 945.7 L1045.0 946.6 L1046.7 945.8 L1048.4 946.6 L1050.0 946.0 L1051.7 945.9 L1053.3 946.2 L1055.0 945.6 L1056.7 945.7 L1058.3 945.5 L1060.0 945.0 L1061.6 945.7 L1063.3 946.2 L1065.0 945.9 L1066.6 945.2 L1068.3 945.6 L1070.0 945.7 L1071.6 944.6 L1073.3 944.7 L1074.9 944.9 L1076.6 944.3 L1078.3 944.9 L1079.9 944.5 L1081.6 945.0 L1083.3 944.7 L1084.9 944.0 L1086.6 943.6 L1088.2 943.5 L1089.9 944.2 L1091.6 944.0 L1093.2 944.3 L1094.9 944.5 L1096.6 943.7 L1098.2 942.2 L1099.9 940.5 L1101.5 938.8 L1103.2 937.3 L1104.9 938.5 L1106.5 940.2 L1108.2 941.2 L1109.8 942.2 L1111.5 942.5 L1113.2 942.1 L1114.8 941.5 L1116.5 941.4 L1118.2 941.4 L1119.8 940.4 L1121.5 939.7 L1123.1 940.1 L1124.8 940.6 L1126.5 940.6 L1128.1 939.0 L1129.8 939.7 L1131.5 938.5 L1133.1 938.2 L1134.8 938.2 L1136.4 937.1 L1138.1 937.9 L1139.8 937.6 L1141.4 936.7 L1143.1 936.8 L1144.7 934.5 L1146.4 933.1 L1148.1 929.7 L1149.7 924.6 L1151.4 917.9 L1153.1 915.4 L1154.7 916.3 L1156.4 920.3 L1158.0 924.1 L1159.7 926.3 L1161.4 927.6 L1163.0 929.1 L1164.7 928.8 L1166.4 929.1 L1168.0 929.3 L1169.7 928.2 L1171.3 927.2 L1173.0 927.9 L1174.7 927.6 L1176.3 927.2 L1178.0 925.8 L1179.7 925.3 L1181.3 924.6 L1183.0 923.6 L1184.6 923.8 L1186.3 922.5 L1188.0 921.4 L1189.6 922.2 L1191.3 918.6 L1192.9 915.4 L1194.6 913.4 L1196.3 911.1 L1197.9 910.0 L1199.6 910.4 L1201.3 912.6 L1202.9 911.9 L1204.6 911.0 L1206.2 910.8 L1207.9 909.9 L1209.6 910.3 L1211.2 909.4 L1212.9 909.8 L1214.6 908.0 L1216.2 907.0 L1217.9 906.7 L1219.5 905.8 L1221.2 906.8 L1222.9 905.1 L1224.5 903.3 L1226.2 901.4 L1227.8 901.3 L1229.5 899.2 L1231.2 899.6 L1232.8 898.6 L1234.5 898.5 L1236.2 899.7 L1237.8 900.6 L1239.5 899.6 L1241.1 898.8 L1242.8 897.9 L1244.5 898.3 L1246.1 898.6 L1247.8 895.2 L1249.5 896.0 L1251.1 892.9 L1252.8 893.4 L1254.4 892.1 L1256.1 889.3 L1257.8 890.2 L1259.4 890.2 L1261.1 888.5 L1262.8 886.8 L1264.4 885.1 L1266.1 883.6 L1267.7 879.3 L1269.4 875.0 L1271.1 864.0 L1272.7 853.1 L1274.4 836.0 L1276.0 816.9 L1277.7 803.2 L1279.4 795.0 L1281.0 797.1 L1282.7 808.4 L1284.4 823.4 L1286.0 841.0 L1287.7 856.1 L1289.3 865.6 L1291.0 869.5 L1292.7 871.6 L1294.3 874.9 L1296.0 872.9 L1297.7 871.4 L1299.3 870.5 L1301.0 868.0 L1302.6 862.2 L1304.3 851.0 L1306.0 842.9 L1307.6 835.0 L1309.3 843.1 L1310.9 846.1 L1312.6 853.1 L1314.3 857.3 L1315.9 856.6 L1317.6 856.7 L1319.3 854.6 L1320.9 854.8 L1322.6 860.0 L1324.2 861.5 L1325.9 863.1 L1327.6 862.4 L1329.2 863.4 L1330.9 865.9 L1332.6 865.4 L1334.2 866.3 L1335.9 865.1 L1337.5 863.1 L1339.2 862.0 L1340.9 862.9 L1342.5 862.9 L1344.2 861.3 L1345.9 856.7 L1347.5 851.1 L1349.2 849.3 L1350.8 843.8 L1352.5 844.4 L1354.2 844.9 L1355.8 846.8 L1357.5 847.2 L1359.1 849.8 L1360.8 852.0 L1362.5 853.3 L1364.1 856.9 L1365.8 856.6 L1367.5 859.8 L1369.1 859.5 L1370.8 860.9 L1372.4 862.1 L1374.1 861.3 L1375.8 860.6 L1377.4 860.2 L1379.1 859.4 L1380.8 858.2 L1382.4 858.8 L1384.1 858.4 L1385.7 856.4 L1387.4 855.6 L1389.1 855.5 L1390.7 854.0 L1392.4 854.3 L1394.0 853.1 L1395.7 855.0 L1397.4 853.4 L1399.0 852.6 L1400.7 851.9 L1402.4 853.9 L1404.0 854.2 L1405.7 851.9 L1407.3 853.8 L1409.0 851.2 L1410.7 850.8 L1412.3 853.5 L1414.0 853.6 L1415.7 851.6 L1417.3 852.9 L1419.0 854.0 L1420.6 851.8 L1422.3 853.1 L1424.0 852.4 L1425.6 855.1 L1427.3 855.0 L1429.0 854.4 L1430.6 857.2 L1432.3 857.7 L1433.9 856.4 L1435.6 855.6 L1437.3 854.4 L1438.9 856.5 L1440.6 854.8 L1442.2 852.7 L1443.9 852.5 L1445.6 851.8 L1447.2 853.3 L1448.9 854.0 L1450.6 854.1 L1452.2 855.0 L1453.9 853.8 L1455.5 854.2 L1457.2 854.3 L1458.9 855.0 L1460.5 854.5 L1462.2 853.7 L1463.9 850.5 L1465.5 848.6 L1467.2 849.1 L1468.8 853.3 L1470.5 856.0 L1472.2 857.8 L1473.8 860.0 L1475.5 859.3 L1477.1 861.0 L1478.8 861.1 L1480.5 861.1 L1482.1 861.6 L1483.8 861.2 L1485.5 863.5 L1487.1 861.7 L1488.8 860.8 L1490.4 863.3 L1492.1 863.0 L1493.8 862.0 L1495.4 863.2 L1497.1 864.4 L1498.8 865.0 L1500.4 863.9 L1502.1 865.7 L1503.7 863.0 L1505.4 862.8 L1507.1 863.2 L1508.7 862.9 L1510.4 864.0 L1512.1 865.4 L1513.7 865.2 L1515.4 865.7 L1517.0 864.2 L1518.7 864.8 L1520.4 867.3 L1522.0 865.5 L1523.7 865.8 L1525.3 866.0 L1527.0 866.1 L1528.7 867.8 L1530.3 866.5 L1532.0 866.4 L1533.7 867.4 L1535.3 867.5 L1537.0 867.9 L1538.6 870.0 L1540.3 869.1 L1542.0 871.6 L1543.6 871.7 L1545.3 871.8 L1547.0 874.1 L1548.6 873.6 L1550.3 872.9 L1551.9 873.3 L1553.6 875.2 L1555.3 873.2 L1556.9 874.1 L1558.6 875.9 L1560.2 875.4 L1561.9 876.0 L1563.6 876.5 L1565.2 877.6 L1566.9 875.8 L1568.6 877.0 L1570.2 877.4 L1571.9 877.6 L1573.5 877.1 L1575.2 880.9 L1576.9 879.9 L1578.5 879.5 L1580.2 881.6 L1581.9 881.8 L1583.5 883.5 L1585.2 883.6 L1586.8 883.2 L1588.5 884.5 L1590.2 884.5 L1591.8 882.2 L1593.5 883.3 L1595.2 884.0 L1596.8 882.7 L1598.5 884.2 L1600.1 883.2 L1601.8 884.6 L1603.5 884.6 L1605.1 887.6 L1606.8 886.7 L1608.4 886.1 L1610.1 888.9 L1611.8 886.6 L1613.4 889.1 L1615.1 888.9 L1616.8 890.2 L1618.4 889.7 L1620.1 889.5 L1621.7 891.7 L1623.4 889.4 L1625.1 891.0 L1626.7 891.3 L1628.4 891.4 L1630.1 892.6 L1631.7 893.4 L1633.4 892.7 L1635.0 893.1 L1636.7 894.5 L1638.4 893.6 L1640.0 895.2 L1641.7 896.8 L1643.3 896.7 L1645.0 897.7 L1646.7 897.8 L1648.3 896.2 L1650.0 897.3 L1651.7 896.2 L1653.3 896.6 L1655.0 899.2 L1656.6 897.1 L1658.3 896.9 L1660.0 899.9 L1661.6 898.2 L1663.3 899.5 L1665.0 899.9 L1666.6 898.7 L1668.3 900.9 L1669.9 900.8 L1671.6 899.7 L1673.3 900.3 L1674.9 901.5 L1676.6 900.4 L1678.3 900.9 L1679.9 901.9 L1681.6 903.9 L1683.2 903.0 L1684.9 903.5 L1686.6 904.7 L1688.2 905.6 L1689.9 904.8 L1691.5 906.1 L1693.2 905.8 L1694.9 905.4 L1696.5 906.2 L1698.2 907.3 L1699.9 907.0 L1701.5 907.7 L1703.2 907.2 L1704.8 908.1 L1706.5 907.3 L1708.2 907.5 L1709.8 908.5 L1711.5 910.4 L1713.2 911.4 L1714.8 909.7 L1716.5 909.8 L1718.1 910.5 L1719.8 911.7 L1721.5 912.4 L1723.1 911.7 L1724.8 911.9 L1726.4 911.9 L1728.1 911.9 L1729.8 911.8 L1731.4 913.5 L1733.1 914.1 L1734.8 912.7 L1736.4 912.8 L1738.1 913.3 L1739.7 915.9 L1741.4 916.6 L1743.1 916.6 L1744.7 916.5 L1746.4 916.2 L1748.1 917.6 L1749.7 917.0 L1751.4 918.3 L1753.0 918.7 L1754.7 917.6 L1756.4 917.8 L1758.0 917.9 L1759.7 918.7 L1761.4 918.6 L1763.0 919.3 L1764.7 919.2 L1766.3 918.3 L1768.0 917.9 L1769.7 919.7 L1771.3 920.2 L1773.0 918.9 L1774.6 919.3 L1776.3 919.4 L1778.0 921.1 L1779.6 921.4 L1781.3 922.1 L1783.0 921.3 L1784.6 922.3 L1786.3 922.1 L1787.9 921.4 L1789.6 922.9 L1791.3 922.9 L1792.9 922.6 L1794.6 922.3 L1796.3 923.5 L1797.9 924.1 L1799.6 925.1 L1801.2 923.8 L1802.9 925.4 L1804.6 925.9 L1806.2 925.2 L1807.9 925.4 L1809.5 925.2 L1811.2 926.2 L1812.9 925.6 L1814.5 927.1 L1816.2 927.4 L1817.9 926.8 L1819.5 928.0 L1821.2 928.1 L1822.8 927.5 L1824.5 927.6 L1826.2 928.7 L1827.8 929.4 L1829.5 929.4 L1831.2 928.9 L1832.8 929.7 L1834.5 930.5 L1836.1 929.8 L1837.8 930.1 L1839.5 929.7 L1841.1 929.7 L1842.8 930.0 L1844.5 931.1 L1846.1 930.8 L1847.8 931.8 L1849.4 932.2 L1851.1 932.3 L1852.8 931.5 L1854.4 931.6 L1856.1 932.9 L1857.7 933.2 L1859.4 933.4 L1861.1 933.6 L1862.7 933.7 L1862.7 949.0 Z" fill="#ffa800"/><path d="M1862.7 949.0 L1862.7 933.7 L1864.4 933.9 L1866.1 934.5 L1867.7 934.1 L1869.4 933.7 L1871.0 934.2 L1872.7 934.0 L1874.4 934.5 L1876.0 935.4 L1877.7 934.8 L1879.4 934.6 L1881.0 935.7 L1882.7 936.5 L1884.3 936.0 L1886.0 936.0 L1887.7 936.1 L1889.3 935.6 L1891.0 936.1 L1892.6 936.2 L1894.3 937.5 L1896.0 937.2 L1897.6 936.9 L1899.3 938.0 L1901.0 938.4 L1902.6 937.7 L1904.3 937.4 L1905.9 938.7 L1907.6 938.3 L1909.3 939.1 L1910.9 938.5 L1912.6 938.6 L1914.3 939.4 L1915.9 939.8 L1917.6 939.2 L1919.2 939.4 L1919.9 939.2 L1919.9 949.0 Z" fill="#97948e"/><path d="M767.5 937.1 L769.1 938.2 L770.8 938.5 L772.5 938.7 L774.1 935.9 L775.8 934.0 L777.4 934.2 L779.1 937.1 L780.8 938.2 L782.4 935.9 L784.1 934.1 L785.8 933.3 L787.4 933.9 L789.1 935.0 L790.7 935.7 L792.4 936.0 L794.1 936.4 L795.7 934.4 L797.4 933.3 L799.1 932.7 L800.7 935.3 L802.4 936.2 L804.0 937.0 L805.7 938.8 L807.4 939.2 L809.0 938.3 L810.7 939.1 L812.3 938.7 L814.0 939.8 L815.7 940.8 L817.3 940.4 L819.0 940.2 L820.7 941.1 L822.3 941.8 L824.0 941.8 L825.6 940.9 L827.3 941.2 L829.0 942.5 L830.6 942.7 L832.3 943.2 L834.0 943.5 L835.6 942.6 L837.3 943.5 L838.9 943.2 L840.6 943.5 L842.3 944.1 L843.9 943.6 L845.6 944.5 L847.3 944.1 L848.9 944.8 L850.6 944.7 L852.2 945.0 L853.9 945.1 L855.6 944.2 L857.2 944.3 L858.9 945.1 L860.5 944.6 L862.2 945.5 L863.9 945.5 L865.5 944.9 L867.2 945.1 L868.9 945.9 L870.5 944.9 L872.2 945.6 L873.8 944.4 L875.5 936.8 L877.2 920.2 L878.8 902.5 L880.5 905.8 L882.2 925.4 L883.8 939.7 L885.5 945.2 L887.1 945.7 L888.8 946.0 L890.5 945.9 L892.1 944.6 L893.8 943.4 L895.4 940.7 L897.1 938.8 L898.8 941.2 L900.4 944.2 L902.1 945.0 L903.8 945.4 L905.4 946.0 L907.1 944.2 L908.7 936.0 L910.4 921.7 L912.1 913.3 L913.7 916.5 L915.4 930.5 L917.1 941.3 L918.7 945.5 L920.4 946.8 L922.0 947.1 L923.7 945.9 L925.4 946.7 L927.0 946.2 L928.7 946.5 L930.4 944.9 L932.0 943.0 L933.7 941.5 L935.3 942.1 L937.0 943.5 L938.7 946.1 L940.3 946.9 L942.0 946.6 L943.6 946.1 L945.3 946.3 L947.0 946.8 L948.6 946.1 L950.3 946.9 L952.0 947.4 L953.6 947.2 L955.3 946.9 L956.9 947.3 L958.6 947.3 L960.3 947.0 L961.9 946.7 L963.6 947.2 L965.3 947.1 L966.9 946.3 L968.6 946.0 L970.2 946.4 L971.9 946.4 L973.6 946.6 L975.2 947.2 L976.9 947.5 L978.5 947.6 L980.2 946.4 L981.9 946.4 L983.5 946.1 L985.2 947.3 L986.9 946.7 L988.5 946.8 L990.2 946.5 L991.8 947.0 L993.5 946.2 L995.2 947.2 L996.8 946.8 L998.5 946.5 L1000.2 946.0 L1001.8 945.8 L1003.5 945.0 L1005.1 943.6 L1006.8 942.5 L1008.5 943.6 L1010.1 944.6 L1011.8 945.4 L1013.5 945.9 L1015.1 946.6 L1016.8 946.3 L1018.4 946.1 L1020.1 946.4 L1021.8 946.4 L1023.4 946.8 L1025.1 946.6 L1026.7 946.5 L1028.4 947.2 L1030.1 946.6 L1031.7 945.9 L1033.4 945.9 L1035.1 946.0 L1036.7 946.5 L1038.4 946.1 L1040.0 946.1 L1041.7 946.3 L1043.4 945.7 L1045.0 946.6 L1046.7 945.8 L1048.4 946.6 L1050.0 946.0 L1051.7 945.9 L1053.3 946.2 L1055.0 945.6 L1056.7 945.7 L1058.3 945.5 L1060.0 945.0 L1061.6 945.7 L1063.3 946.2 L1065.0 945.9 L1066.6 945.2 L1068.3 945.6 L1070.0 945.7 L1071.6 944.6 L1073.3 944.7 L1074.9 944.9 L1076.6 944.3 L1078.3 944.9 L1079.9 944.5 L1081.6 945.0 L1083.3 944.7 L1084.9 944.0 L1086.6 943.6 L1088.2 943.5 L1089.9 944.2 L1091.6 944.0 L1093.2 944.3 L1094.9 944.5 L1096.6 943.7 L1098.2 942.2 L1099.9 940.5 L1101.5 938.8 L1103.2 937.3 L1104.9 938.5 L1106.5 940.2 L1108.2 941.2 L1109.8 942.2 L1111.5 942.5 L1113.2 942.1 L1114.8 941.5 L1116.5 941.4 L1118.2 941.4 L1119.8 940.4 L1121.5 939.7 L1123.1 940.1 L1124.8 940.6 L1126.5 940.6 L1128.1 939.0 L1129.8 939.7 L1131.5 938.5 L1133.1 938.2 L1134.8 938.2 L1136.4 937.1 L1138.1 937.9 L1139.8 937.6 L1141.4 936.7 L1143.1 936.8 L1144.7 934.5 L1146.4 933.1 L1148.1 929.7 L1149.7 924.6 L1151.4 917.9 L1153.1 915.4 L1154.7 916.3 L1156.4 920.3 L1158.0 924.1 L1159.7 926.3 L1161.4 927.6 L1163.0 929.1 L1164.7 928.8 L1166.4 929.1 L1168.0 929.3 L1169.7 928.2 L1171.3 927.2 L1173.0 927.9 L1174.7 927.6 L1176.3 927.2 L1178.0 925.8 L1179.7 925.3 L1181.3 924.6 L1183.0 923.6 L1184.6 923.8 L1186.3 922.5 L1188.0 921.4 L1189.6 922.2 L1191.3 918.6 L1192.9 915.4 L1194.6 913.4 L1196.3 911.1 L1197.9 910.0 L1199.6 910.4 L1201.3 912.6 L1202.9 911.9 L1204.6 911.0 L1206.2 910.8 L1207.9 909.9 L1209.6 910.3 L1211.2 909.4 L1212.9 909.8 L1214.6 908.0 L1216.2 907.0 L1217.9 906.7 L1219.5 905.8 L1221.2 906.8 L1222.9 905.1 L1224.5 903.3 L1226.2 901.4 L1227.8 901.3 L1229.5 899.2 L1231.2 899.6 L1232.8 898.6 L1234.5 898.5 L1236.2 899.7 L1237.8 900.6 L1239.5 899.6 L1241.1 898.8 L1242.8 897.9 L1244.5 898.3 L1246.1 898.6 L1247.8 895.2 L1249.5 896.0 L1251.1 892.9 L1252.8 893.4 L1254.4 892.1 L1256.1 889.3 L1257.8 890.2 L1259.4 890.2 L1261.1 888.5 L1262.8 886.8 L1264.4 885.1 L1266.1 883.6 L1267.7 879.3 L1269.4 875.0 L1271.1 864.0 L1272.7 853.1 L1274.4 836.0 L1276.0 816.9 L1277.7 803.2 L1279.4 795.0 L1281.0 797.1 L1282.7 808.4 L1284.4 823.4 L1286.0 841.0 L1287.7 856.1 L1289.3 865.6 L1291.0 869.5 L1292.7 871.6 L1294.3 874.9 L1296.0 872.9 L1297.7 871.4 L1299.3 870.5 L1301.0 868.0 L1302.6 862.2 L1304.3 851.0 L1306.0 842.9 L1307.6 835.0 L1309.3 843.1 L1310.9 846.1 L1312.6 853.1 L1314.3 857.3 L1315.9 856.6 L1317.6 856.7 L1319.3 854.6 L1320.9 854.8 L1322.6 860.0 L1324.2 861.5 L1325.9 863.1 L1327.6 862.4 L1329.2 863.4 L1330.9 865.9 L1332.6 865.4 L1334.2 866.3 L1335.9 865.1 L1337.5 863.1 L1339.2 862.0 L1340.9 862.9 L1342.5 862.9 L1344.2 861.3 L1345.9 856.7 L1347.5 851.1 L1349.2 849.3 L1350.8 843.8 L1352.5 844.4 L1354.2 844.9 L1355.8 846.8 L1357.5 847.2 L1359.1 849.8 L1360.8 852.0 L1362.5 853.3 L1364.1 856.9 L1365.8 856.6 L1367.5 859.8 L1369.1 859.5 L1370.8 860.9 L1372.4 862.1 L1374.1 861.3 L1375.8 860.6 L1377.4 860.2 L1379.1 859.4 L1380.8 858.2 L1382.4 858.8 L1384.1 858.4 L1385.7 856.4 L1387.4 855.6 L1389.1 855.5 L1390.7 854.0 L1392.4 854.3 L1394.0 853.1 L1395.7 855.0 L1397.4 853.4 L1399.0 852.6 L1400.7 851.9 L1402.4 853.9 L1404.0 854.2 L1405.7 851.9 L1407.3 853.8 L1409.0 851.2 L1410.7 850.8 L1412.3 853.5 L1414.0 853.6 L1415.7 851.6 L1417.3 852.9 L1419.0 854.0 L1420.6 851.8 L1422.3 853.1 L1424.0 852.4 L1425.6 855.1 L1427.3 855.0 L1429.0 854.4 L1430.6 857.2 L1432.3 857.7 L1433.9 856.4 L1435.6 855.6 L1437.3 854.4 L1438.9 856.5 L1440.6 854.8 L1442.2 852.7 L1443.9 852.5 L1445.6 851.8 L1447.2 853.3 L1448.9 854.0 L1450.6 854.1 L1452.2 855.0 L1453.9 853.8 L1455.5 854.2 L1457.2 854.3 L1458.9 855.0 L1460.5 854.5 L1462.2 853.7 L1463.9 850.5 L1465.5 848.6 L1467.2 849.1 L1468.8 853.3 L1470.5 856.0 L1472.2 857.8 L1473.8 860.0 L1475.5 859.3 L1477.1 861.0 L1478.8 861.1 L1480.5 861.1 L1482.1 861.6 L1483.8 861.2 L1485.5 863.5 L1487.1 861.7 L1488.8 860.8 L1490.4 863.3 L1492.1 863.0 L1493.8 862.0 L1495.4 863.2 L1497.1 864.4 L1498.8 865.0 L1500.4 863.9 L1502.1 865.7 L1503.7 863.0 L1505.4 862.8 L1507.1 863.2 L1508.7 862.9 L1510.4 864.0 L1512.1 865.4 L1513.7 865.2 L1515.4 865.7 L1517.0 864.2 L1518.7 864.8 L1520.4 867.3 L1522.0 865.5 L1523.7 865.8 L1525.3 866.0 L1527.0 866.1 L1528.7 867.8 L1530.3 866.5 L1532.0 866.4 L1533.7 867.4 L1535.3 867.5 L1537.0 867.9 L1538.6 870.0 L1540.3 869.1 L1542.0 871.6 L1543.6 871.7 L1545.3 871.8 L1547.0 874.1 L1548.6 873.6 L1550.3 872.9 L1551.9 873.3 L1553.6 875.2 L1555.3 873.2 L1556.9 874.1 L1558.6 875.9 L1560.2 875.4 L1561.9 876.0 L1563.6 876.5 L1565.2 877.6 L1566.9 875.8 L1568.6 877.0 L1570.2 877.4 L1571.9 877.6 L1573.5 877.1 L1575.2 880.9 L1576.9 879.9 L1578.5 879.5 L1580.2 881.6 L1581.9 881.8 L1583.5 883.5 L1585.2 883.6 L1586.8 883.2 L1588.5 884.5 L1590.2 884.5 L1591.8 882.2 L1593.5 883.3 L1595.2 884.0 L1596.8 882.7 L1598.5 884.2 L1600.1 883.2 L1601.8 884.6 L1603.5 884.6 L1605.1 887.6 L1606.8 886.7 L1608.4 886.1 L1610.1 888.9 L1611.8 886.6 L1613.4 889.1 L1615.1 888.9 L1616.8 890.2 L1618.4 889.7 L1620.1 889.5 L1621.7 891.7 L1623.4 889.4 L1625.1 891.0 L1626.7 891.3 L1628.4 891.4 L1630.1 892.6 L1631.7 893.4 L1633.4 892.7 L1635.0 893.1 L1636.7 894.5 L1638.4 893.6 L1640.0 895.2 L1641.7 896.8 L1643.3 896.7 L1645.0 897.7 L1646.7 897.8 L1648.3 896.2 L1650.0 897.3 L1651.7 896.2 L1653.3 896.6 L1655.0 899.2 L1656.6 897.1 L1658.3 896.9 L1660.0 899.9 L1661.6 898.2 L1663.3 899.5 L1665.0 899.9 L1666.6 898.7 L1668.3 900.9 L1669.9 900.8 L1671.6 899.7 L1673.3 900.3 L1674.9 901.5 L1676.6 900.4 L1678.3 900.9 L1679.9 901.9 L1681.6 903.9 L1683.2 903.0 L1684.9 903.5 L1686.6 904.7 L1688.2 905.6 L1689.9 904.8 L1691.5 906.1 L1693.2 905.8 L1694.9 905.4 L1696.5 906.2 L1698.2 907.3 L1699.9 907.0 L1701.5 907.7 L1703.2 907.2 L1704.8 908.1 L1706.5 907.3 L1708.2 907.5 L1709.8 908.5 L1711.5 910.4 L1713.2 911.4 L1714.8 909.7 L1716.5 909.8 L1718.1 910.5 L1719.8 911.7 L1721.5 912.4 L1723.1 911.7 L1724.8 911.9 L1726.4 911.9 L1728.1 911.9 L1729.8 911.8 L1731.4 913.5 L1733.1 914.1 L1734.8 912.7 L1736.4 912.8 L1738.1 913.3 L1739.7 915.9 L1741.4 916.6 L1743.1 916.6 L1744.7 916.5 L1746.4 916.2 L1748.1 917.6 L1749.7 917.0 L1751.4 918.3 L1753.0 918.7 L1754.7 917.6 L1756.4 917.8 L1758.0 917.9 L1759.7 918.7 L1761.4 918.6 L1763.0 919.3 L1764.7 919.2 L1766.3 918.3 L1768.0 917.9 L1769.7 919.7 L1771.3 920.2 L1773.0 918.9 L1774.6 919.3 L1776.3 919.4 L1778.0 921.1 L1779.6 921.4 L1781.3 922.1 L1783.0 921.3 L1784.6 922.3 L1786.3 922.1 L1787.9 921.4 L1789.6 922.9 L1791.3 922.9 L1792.9 922.6 L1794.6 922.3 L1796.3 923.5 L1797.9 924.1 L1799.6 925.1 L1801.2 923.8 L1802.9 925.4 L1804.6 925.9 L1806.2 925.2 L1807.9 925.4 L1809.5 925.2 L1811.2 926.2 L1812.9 925.6 L1814.5 927.1 L1816.2 927.4 L1817.9 926.8 L1819.5 928.0 L1821.2 928.1 L1822.8 927.5 L1824.5 927.6 L1826.2 928.7 L1827.8 929.4 L1829.5 929.4 L1831.2 928.9 L1832.8 929.7 L1834.5 930.5 L1836.1 929.8 L1837.8 930.1 L1839.5 929.7 L1841.1 929.7 L1842.8 930.0 L1844.5 931.1 L1846.1 930.8 L1847.8 931.8 L1849.4 932.2 L1851.1 932.3 L1852.8 931.5 L1854.4 931.6 L1856.1 932.9 L1857.7 933.2 L1859.4 933.4 L1861.1 933.6 L1862.7 933.7" fill="none" stroke="#8f6c14" stroke-width="0.9" opacity="0.8"/><path d="M722.6 948.5 L724.3 936.7 L725.9 932.5 L727.6 932.0 L729.2 931.9 L730.9 931.7 L732.6 932.3 L734.2 932.1 L735.9 932.0 L737.6 931.9 L739.2 932.9 L740.9 932.9 L742.5 933.3 L744.2 932.5 L745.9 932.5 L747.5 933.5 L749.2 932.5 L750.9 932.4 L752.5 932.9 L754.2 933.1 L755.8 933.9 L757.5 934.4 L759.2 933.8 L760.8 934.3 L762.5 934.2 L764.2 934.0 L765.8 934.3" fill="none" stroke="#77746e" stroke-width="0.8" opacity="0.7"/><path d="M1862.7 933.7 L1864.4 933.9 L1866.1 934.5 L1867.7 934.1 L1869.4 933.7 L1871.0 934.2 L1872.7 934.0 L1874.4 934.5 L1876.0 935.4 L1877.7 934.8 L1879.4 934.6 L1881.0 935.7 L1882.7 936.5 L1884.3 936.0 L1886.0 936.0 L1887.7 936.1 L1889.3 935.6 L1891.0 936.1 L1892.6 936.2 L1894.3 937.5 L1896.0 937.2 L1897.6 936.9 L1899.3 938.0 L1901.0 938.4 L1902.6 937.7 L1904.3 937.4 L1905.9 938.7 L1907.6 938.3 L1909.3 939.1 L1910.9 938.5 L1912.6 938.6 L1914.3 939.4 L1915.9 939.8 L1917.6 939.2 L1919.2 939.4 L1919.9 939.2" fill="none" stroke="#77746e" stroke-width="0.8" opacity="0.7"/><path d="M722.6 947.4 L724.3 946.9 L725.9 946.4 L727.6 945.5 L729.2 944.6 L730.9 943.8 L732.6 943.1 L734.2 942.5 L735.9 942.0 L737.6 941.5 L739.2 941.0 L740.9 940.6 L742.5 940.1 L744.2 939.7 L745.9 939.4 L747.5 939.0 L749.2 938.7 L750.9 938.4 L752.5 938.1 L754.2 937.9 L755.8 937.7 L757.5 937.6 L759.2 937.4 L760.8 937.3 L762.5 937.1 L764.2 937.0 L765.8 936.8 L767.5 936.6 L769.1 936.4 L770.8 935.9 L772.5 934.2 L774.1 930.1 L775.8 926.4 L777.4 927.9 L779.1 932.1 L780.8 934.4 L782.4 935.0 L784.1 935.2" fill="none" stroke="#ea3cd4" stroke-width="1.8" stroke-linejoin="round"/><path d="M784.1 935.2 L785.8 935.4 L787.4 935.8 L789.1 936.1 L790.7 936.4 L792.4 936.8 L794.1 937.1 L795.7 937.4 L797.4 937.8 L799.1 938.1 L800.7 938.5 L802.4 938.8 L804.0 939.1 L805.7 939.5 L807.4 939.8 L809.0 940.1 L810.7 940.5 L812.3 940.8 L814.0 941.1 L815.7 941.4 L817.3 941.7 L819.0 941.9 L820.7 942.1 L822.3 942.4 L824.0 942.6 L825.6 942.8 L827.3 943.0 L829.0 943.3 L830.6 943.5 L832.3 943.7 L834.0 943.9 L835.6 944.1 L837.3 944.3 L838.9 944.5 L840.6 944.7 L842.3 944.9 L843.9 945.0 L845.6 945.2 L847.3 945.4 L848.9 945.6 L850.6 945.7 L852.2 945.8 L853.9 945.9 L855.6 946.0 L857.2 946.1 L858.9 946.2 L860.5 946.3 L862.2 946.4 L863.9 946.5 L865.5 946.6 L867.2 946.6 L868.9 946.7 L870.5 946.7 L872.2 946.6 L873.8 945.3 L875.5 938.4 L877.2 921.1 L878.8 903.0 L880.5 905.6 L882.2 925.4 L883.8 940.7 L885.5 946.0 L887.1 946.9 L888.8 947.0 L890.5 947.1 L892.1 947.1 L893.8 947.1 L895.4 947.2 L897.1 947.2 L898.8 947.2 L900.4 947.3 L902.1 947.3 L903.8 947.3 L905.4 947.0 L907.1 944.9 L908.7 937.5 L910.4 923.9 L912.1 913.9 L913.7 918.7 L915.4 932.6 L917.1 942.9 L918.7 946.7 L920.4 947.4 L922.0 947.5 L923.7 947.6 L925.4 947.6 L927.0 947.6 L928.7 947.6 L930.4 947.6 L932.0 947.7 L933.7 947.7 L935.3 947.7 L937.0 947.7 L938.7 947.7 L940.3 947.7 L942.0 947.7 L943.6 947.7 L945.3 947.7 L947.0 947.8 L948.6 947.8 L950.3 947.8 L952.0 947.8 L953.6 947.8 L955.3 947.8 L956.9 947.8 L958.6 947.8 L960.3 947.8 L961.9 947.9 L963.6 947.9 L965.3 947.9 L966.9 947.9 L968.6 947.9 L970.2 947.9 L971.9 947.9 L973.6 947.9 L975.2 947.9 L976.9 947.9 L978.5 947.9 L980.2 947.9 L981.9 947.9 L983.5 947.9 L985.2 947.9 L986.9 947.9 L988.5 947.9 L990.2 947.9 L991.8 947.9 L993.5 947.9 L995.2 947.9 L996.8 947.9 L998.5 947.9 L1000.2 947.9 L1001.8 947.9 L1003.5 947.8 L1005.1 947.8 L1006.8 947.8 L1008.5 947.8 L1010.1 947.8 L1011.8 947.8 L1013.5 947.8 L1015.1 947.8 L1016.8 947.8 L1018.4 947.7 L1020.1 947.7 L1021.8 947.7 L1023.4 947.7 L1025.1 947.7 L1026.7 947.7 L1028.4 947.7 L1030.1 947.7 L1031.7 947.6 L1033.4 947.6 L1035.1 947.5 L1036.7 947.5 L1038.4 947.4 L1040.0 947.3 L1041.7 947.3 L1043.4 947.2 L1045.0 947.1 L1046.7 947.1 L1048.4 947.0 L1050.0 947.0 L1051.7 946.9 L1053.3 946.8 L1055.0 946.8 L1056.7 946.7 L1058.3 946.6 L1060.0 946.6 L1061.6 946.5 L1063.3 946.5 L1065.0 946.4 L1066.6 946.3 L1068.3 946.2 L1070.0 946.1 L1071.6 946.1 L1073.3 946.0 L1074.9 945.9 L1076.6 945.8 L1078.3 945.7 L1079.9 945.6 L1081.6 945.6 L1083.3 945.5 L1084.9 945.4 L1086.6 945.3 L1088.2 945.2 L1089.9 945.1 L1091.6 945.1 L1093.2 945.0 L1094.9 944.9 L1096.6 944.8 L1098.2 944.6 L1099.9 944.5 L1101.5 944.3 L1103.2 944.1 L1104.9 943.9 L1106.5 943.7 L1108.2 943.4 L1109.8 943.2 L1111.5 943.0 L1113.2 942.8 L1114.8 942.6 L1116.5 942.4 L1118.2 942.2 L1119.8 941.9 L1121.5 941.7 L1123.1 941.4 L1124.8 941.1 L1126.5 940.9 L1128.1 940.6 L1129.8 940.3 L1131.5 940.0 L1133.1 939.7 L1134.8 939.4 L1136.4 939.0 L1138.1 938.7 L1139.8 938.3 L1141.4 938.0 L1143.1 937.5 L1144.7 936.6 L1146.4 934.7 L1148.1 931.0 L1149.7 925.8 L1151.4 920.6 L1153.1 918.2 L1154.7 920.0 L1156.4 924.5 L1158.0 929.1 L1159.7 932.1 L1161.4 933.2 L1163.0 933.2 L1164.7 932.7 L1166.4 932.1 L1168.0 931.4 L1169.7 930.7 L1171.3 930.0 L1173.0 929.3 L1174.7 928.6 L1176.3 927.9 L1178.0 927.2 L1179.7 926.6 L1181.3 925.9 L1183.0 925.3 L1184.6 924.6 L1186.3 924.0 L1188.0 923.3 L1189.6 922.2 L1191.3 920.1 L1192.9 916.7 L1194.6 913.1 L1196.3 911.2 L1197.9 912.4 L1199.6 915.4 L1201.3 918.0 L1202.9 919.2 L1204.6 919.2 L1206.2 918.5 L1207.9 917.5 L1209.6 916.4 L1211.2 915.2 L1212.9 914.1 L1214.6 912.9 L1216.2 911.7 L1217.9 910.3 L1219.5 908.9 L1221.2 907.6 L1222.9 906.9 L1224.5 906.7 L1226.2 907.0 L1227.8 907.7 L1229.5 908.1 L1231.2 908.1 L1232.8 907.6 L1234.5 906.7 L1236.2 905.5 L1237.8 904.2 L1239.5 903.0 L1241.1 901.8 L1242.8 900.8 L1244.5 899.8 L1246.1 899.1 L1247.8 898.4 L1249.5 897.9 L1251.1 897.3 L1252.8 896.8 L1254.4 896.2 L1256.1 895.6 L1257.8 894.9 L1259.4 894.1 L1261.1 893.2 L1262.8 892.2 L1264.4 890.9 L1266.1 888.7 L1267.7 885.0 L1269.4 878.6 L1271.1 868.6 L1272.7 854.3 L1274.4 836.5 L1276.0 818.1 L1277.7 803.3 L1279.4 796.1 L1281.0 799.0 L1282.7 810.8 L1284.4 827.8 L1286.0 845.6 L1287.7 860.5 L1289.3 870.9 L1291.0 877.2 L1292.7 880.3 L1294.3 881.4 L1296.0 881.6 L1297.7 881.3 L1299.3 880.9 L1301.0 880.4 L1302.6 880.0 L1304.3 879.5 L1306.0 879.0 L1307.6 878.5 L1309.3 878.0 L1310.9 877.5 L1312.6 877.0 L1314.3 876.5 L1315.9 876.1 L1317.6 875.6 L1319.3 875.2 L1320.9 874.7 L1322.6 874.3 L1324.2 873.9 L1325.9 873.4 L1327.6 873.0 L1329.2 872.5 L1330.9 872.1 L1332.6 871.6 L1334.2 871.2 L1335.9 870.8 L1337.5 870.3 L1339.2 869.8 L1340.9 869.2 L1342.5 868.3 L1344.2 866.9 L1345.9 864.6 L1347.5 861.5 L1349.2 858.0 L1350.8 855.2 L1352.5 854.1 L1354.2 855.2 L1355.8 857.6 L1357.5 860.3 L1359.1 862.4 L1360.8 863.6 L1362.5 864.1 L1364.1 864.1 L1365.8 864.0 L1367.5 863.7 L1369.1 863.5 L1370.8 863.3 L1372.4 863.1 L1374.1 862.9 L1375.8 862.8 L1377.4 862.7 L1379.1 862.6 L1380.8 862.5 L1382.4 862.5 L1384.1 862.4 L1385.7 862.3 L1387.4 862.3 L1389.1 862.2 L1390.7 862.1 L1392.4 862.1 L1394.0 862.0 L1395.7 861.9 L1397.4 861.8 L1399.0 861.8 L1400.7 861.7 L1402.4 861.6 L1404.0 861.5 L1405.7 861.4 L1407.3 861.3 L1409.0 861.2 L1410.7 861.1 L1412.3 861.0 L1414.0 860.9 L1415.7 860.9 L1417.3 860.8 L1419.0 860.8 L1420.6 860.8 L1422.3 860.8 L1424.0 860.9 L1425.6 860.9 L1427.3 860.9 L1429.0 861.0 L1430.6 861.0 L1432.3 861.1 L1433.9 861.1 L1435.6 861.2 L1437.3 861.2 L1438.9 861.3 L1440.6 861.4 L1442.2 861.5 L1443.9 861.6 L1445.6 861.7 L1447.2 861.8 L1448.9 861.9 L1450.6 862.0 L1452.2 862.2 L1453.9 862.3 L1455.5 862.5 L1457.2 862.6 L1458.9 862.8 L1460.5 863.0 L1462.2 863.1 L1463.9 863.3 L1465.5 863.5 L1467.2 863.6 L1468.8 863.8 L1470.5 864.0 L1472.2 864.1 L1473.8 864.3 L1475.5 864.6 L1477.1 864.8 L1478.8 865.0 L1480.5 865.2 L1482.1 865.5 L1483.8 865.7 L1485.5 865.9 L1487.1 866.2 L1488.8 866.4 L1490.4 866.7 L1492.1 867.0 L1493.8 867.3 L1495.4 867.6 L1497.1 867.9 L1498.8 868.2 L1500.4 868.5 L1502.1 868.8 L1503.7 869.1 L1505.4 869.4 L1507.1 869.7 L1508.7 870.0 L1510.4 870.3 L1512.1 870.5 L1513.7 870.8 L1515.4 871.1 L1517.0 871.3 L1518.7 871.6 L1520.4 871.8 L1522.0 872.0 L1523.7 872.1 L1525.3 872.1 L1527.0 871.9 L1528.7 871.7 L1530.3 871.4 L1532.0 871.3 L1533.7 871.1 L1535.3 871.0 L1537.0 871.0 L1538.6 871.2 L1540.3 871.7 L1542.0 872.5 L1543.6 873.5 L1545.3 874.8 L1547.0 876.0 L1548.6 876.9 L1550.3 877.7 L1551.9 878.3 L1553.6 878.7 L1555.3 879.0 L1556.9 879.3 L1558.6 879.6 L1560.2 880.0 L1561.9 880.3 L1563.6 880.6 L1565.2 880.9 L1566.9 881.2 L1568.6 881.5 L1570.2 881.9 L1571.9 882.2 L1573.5 882.5 L1575.2 882.8 L1576.9 883.1 L1578.5 883.5 L1580.2 883.8 L1581.9 884.2 L1583.5 884.5 L1585.2 884.9 L1586.8 885.3 L1588.5 885.6 L1590.2 886.0 L1591.8 886.4 L1593.5 886.7 L1595.2 887.1 L1596.8 887.5 L1598.5 887.8 L1600.1 888.2 L1601.8 888.6 L1603.5 888.9 L1605.1 889.3 L1606.8 889.7 L1608.4 890.0 L1610.1 890.4 L1611.8 890.8 L1613.4 891.1 L1615.1 891.5 L1616.8 891.9 L1618.4 892.3 L1620.1 892.6 L1621.7 893.0 L1623.4 893.4 L1625.1 893.8 L1626.7 894.2 L1628.4 894.6 L1630.1 894.9 L1631.7 895.3 L1633.4 895.7 L1635.0 896.1 L1636.7 896.5 L1638.4 896.9 L1640.0 897.3 L1641.7 897.6 L1643.3 898.0 L1645.0 898.4 L1646.7 898.8 L1648.3 899.2 L1650.0 899.5 L1651.7 899.9 L1653.3 900.3 L1655.0 900.6 L1656.6 900.9 L1658.3 901.3 L1660.0 901.6 L1661.6 901.9 L1663.3 902.2 L1665.0 902.6 L1666.6 902.9 L1668.3 903.2 L1669.9 903.6 L1671.6 903.9 L1673.3 904.2 L1674.9 904.6 L1676.6 904.9 L1678.3 905.2 L1679.9 905.5 L1681.6 905.9 L1683.2 906.2 L1684.9 906.5 L1686.6 906.9 L1688.2 907.2 L1689.9 907.5 L1691.5 907.8 L1693.2 908.1 L1694.9 908.5 L1696.5 908.8 L1698.2 909.1 L1699.9 909.4 L1701.5 909.8 L1703.2 910.1 L1704.8 910.4 L1706.5 910.7 L1708.2 911.0 L1709.8 911.3 L1711.5 911.5 L1713.2 911.7 L1714.8 911.9 L1716.5 912.1 L1718.1 912.3 L1719.8 912.5 L1721.5 912.7 L1723.1 912.9 L1724.8 913.1 L1726.4 913.4 L1728.1 913.7 L1729.8 914.2 L1731.4 914.7 L1733.1 915.3 L1734.8 916.0 L1736.4 916.7 L1738.1 917.3 L1739.7 917.9 L1741.4 918.4 L1743.1 918.7 L1744.7 918.9 L1746.4 919.0 L1748.1 919.1 L1749.7 919.2 L1751.4 919.3 L1753.0 919.4 L1754.7 919.4 L1756.4 919.5 L1758.0 919.6 L1759.7 919.7 L1761.4 919.9 L1763.0 920.0 L1764.7 920.2 L1766.3 920.3 L1768.0 920.5 L1769.7 920.6 L1771.3 920.9 L1773.0 921.2 L1774.6 921.6 L1776.3 922.1 L1778.0 922.7 L1779.6 923.2 L1781.3 923.7 L1783.0 924.2 L1784.6 924.5 L1786.3 924.9 L1787.9 925.1 L1789.6 925.4 L1791.3 925.7 L1792.9 926.0 L1794.6 926.3 L1796.3 926.5 L1797.9 926.8 L1799.6 927.1 L1801.2 927.4 L1802.9 927.7 L1804.6 927.9 L1806.2 928.2 L1807.9 928.5 L1809.5 928.8 L1811.2 929.1 L1812.9 929.4 L1814.5 929.7 L1816.2 930.0 L1817.9 930.3 L1819.5 930.6 L1821.2 930.9 L1822.8 931.2 L1824.5 931.5 L1826.2 931.8 L1827.8 932.2 L1829.5 932.5 L1831.2 932.8 L1832.8 933.1 L1834.5 933.4 L1836.1 933.7 L1837.8 934.0 L1839.5 934.3 L1841.1 934.6 L1842.8 934.8 L1844.5 935.1 L1846.1 935.3 L1847.8 935.5 L1849.4 935.8 L1851.1 936.0 L1852.8 936.2 L1854.4 936.5 L1856.1 936.7 L1857.7 937.0 L1859.4 937.2 L1861.1 937.4 L1862.7 937.7" fill="none" stroke="#f8409c" stroke-width="1.8" stroke-linejoin="round"/><path d="M1862.7 937.7 L1864.4 937.9 L1866.1 938.1 L1867.7 938.4 L1869.4 938.6 L1871.0 938.8 L1872.7 939.1 L1874.4 939.3 L1876.0 939.5 L1877.7 939.7 L1879.4 940.0 L1881.0 940.2 L1882.7 940.4 L1884.3 940.7 L1886.0 940.9 L1887.7 941.1 L1889.3 941.4 L1891.0 941.6 L1892.6 941.8 L1894.3 942.0 L1896.0 942.3 L1897.6 942.5 L1899.3 942.7 L1901.0 943.0 L1902.6 943.2 L1904.3 943.4 L1905.9 943.7 L1907.6 943.9 L1909.3 944.1 L1910.9 944.3 L1912.6 944.6 L1914.3 944.8 L1915.9 945.0 L1917.6 945.2 L1919.2 945.3 L1919.9 945.4" fill="none" stroke="#d040d0" stroke-width="1.9" stroke-linejoin="round"/><path d="M1267.7 885.0 L1269.4 878.6 L1271.1 868.6 L1272.7 854.3 L1274.4 836.5 L1276.0 818.1 L1277.7 803.3 L1279.4 796.1 L1281.0 799.0 L1282.7 810.8 L1284.4 827.8 L1286.0 845.6 L1287.7 860.5 L1289.3 870.9 L1291.0 877.2" fill="none" stroke="#ee30cc" stroke-width="1.8" stroke-linejoin="round"/><path d="M872.2 946.6 L873.8 945.3 L875.5 938.4 L877.2 921.1 L878.8 903.0 L880.5 905.6 L882.2 925.4 L883.8 940.7 L885.5 946.0 L887.1 946.9" fill="none" stroke="#ee30cc" stroke-width="1.8" stroke-linejoin="round"/><path d="M905.4 947.0 L907.1 944.9 L908.7 937.5 L910.4 923.9 L912.1 913.9 L913.7 918.7 L915.4 932.6 L917.1 942.9 L918.7 946.7" fill="none" stroke="#ee30cc" stroke-width="1.8" stroke-linejoin="round"/><rect x="703.8" y="741" width="3.6" height="208.8" fill="#86c5ea"/><rect x="703.8" y="948.2" width="1217.2" height="1.6" fill="#7cc4ec"/><path d="M707 947.5 h4 M707 926.6 h4 M707 905.7 h4 M707 884.8 h4 M707 863.9 h4 M707 843.0 h4 M707 822.1 h4 M707 801.2 h4 M707 780.3 h4 M707 759.4 h4" stroke="#86c5ea" stroke-width="1.6" fill="none"/><path d="M715.6 948.4 v-3.2 M732.2 948.4 v-3.2 M748.9 948.4 v-3.2 M765.5 948.4 v-3.2 M782.1 948.4 v-3.2 M798.7 948.4 v-3.2 M815.3 948.4 v-3.2 M832.0 948.4 v-3.2 M848.6 948.4 v-3.2 M881.8 948.4 v-3.2 M898.4 948.4 v-3.2 M915.1 948.4 v-3.2 M931.7 948.4 v-3.2 M948.3 948.4 v-3.2 M964.9 948.4 v-3.2 M981.5 948.4 v-3.2 M998.2 948.4 v-3.2 M1014.8 948.4 v-3.2 M1048.0 948.4 v-3.2 M1064.6 948.4 v-3.2 M1081.3 948.4 v-3.2 M1097.9 948.4 v-3.2 M1114.5 948.4 v-3.2 M1131.1 948.4 v-3.2 M1147.7 948.4 v-3.2 M1164.4 948.4 v-3.2 M1181.0 948.4 v-3.2 M1214.2 948.4 v-3.2 M1230.8 948.4 v-3.2 M1247.5 948.4 v-3.2 M1264.1 948.4 v-3.2 M1280.7 948.4 v-3.2 M1297.3 948.4 v-3.2 M1313.9 948.4 v-3.2 M1330.6 948.4 v-3.2 M1347.2 948.4 v-3.2 M1380.4 948.4 v-3.2 M1397.0 948.4 v-3.2 M1413.7 948.4 v-3.2 M1430.3 948.4 v-3.2 M1446.9 948.4 v-3.2 M1463.5 948.4 v-3.2 M1480.1 948.4 v-3.2 M1496.8 948.4 v-3.2 M1513.4 948.4 v-3.2 M1546.6 948.4 v-3.2 M1563.2 948.4 v-3.2 M1579.9 948.4 v-3.2 M1596.5 948.4 v-3.2 M1613.1 948.4 v-3.2 M1629.7 948.4 v-3.2 M1646.3 948.4 v-3.2 M1663.0 948.4 v-3.2 M1679.6 948.4 v-3.2 M1712.8 948.4 v-3.2 M1729.4 948.4 v-3.2 M1746.1 948.4 v-3.2 M1762.7 948.4 v-3.2 M1779.3 948.4 v-3.2 M1795.9 948.4 v-3.2 M1812.5 948.4 v-3.2 M1829.2 948.4 v-3.2 M1845.8 948.4 v-3.2 M1879.0 948.4 v-3.2 M1895.6 948.4 v-3.2 M1912.3 948.4 v-3.2" stroke="#a6d4ee" stroke-width="1.2" fill="none" opacity="0.75"/><path d="M865.2 948.4 v-6.5 M1031.4 948.4 v-6.5 M1197.6 948.4 v-6.5 M1363.8 948.4 v-6.5 M1530.0 948.4 v-6.5 M1696.2 948.4 v-6.5 M1862.4 948.4 v-6.5" stroke="#8ccaee" stroke-width="1.5" fill="none" opacity="0.85"/><g clip-path="url(#plotclip)" font-family="Liberation Mono" font-size="9.6"><text transform="translate(769.0 746.1) scale(0.97 1.16)" fill="#9a3038" stroke="#9a3038" stroke-width="0.14">Mo:Lg1</text><text transform="translate(770.5 764.6) scale(0.97 1.16)" fill="#9a3038" stroke="#9a3038" stroke-width="0.14">Mo:Lb1</text><text transform="translate(760.4 783.3) scale(0.97 1.16)" fill="#9a3038" stroke="#9a3038" stroke-width="0.14">Mo:La</text><text transform="translate(798.4 783.3) scale(0.97 1.16)" fill="#2b2b2b" stroke="#2b2b2b" stroke-width="0.14">U:Mb</text><text transform="translate(789.0 801.8) scale(0.97 1.16)" fill="#2b2b2b" stroke="#2b2b2b" stroke-width="0.14">Th:Mb</text><text transform="translate(754.5 820.4) scale(0.97 1.16)" fill="#2b2b2b" stroke="#2b2b2b" stroke-width="0.14">Y:Lb</text><text transform="translate(807.5 820.4) scale(0.97 1.16)" fill="#2b2b2b" stroke="#2b2b2b" stroke-width="0.14">Sn:Lb</text><text transform="translate(766.2 838.9) scale(0.97 1.16)" fill="#2b2b2b" stroke="#2b2b2b" stroke-width="0.14">Pb:Mb</text><text transform="translate(799.4 838.9) scale(0.97 1.16)" fill="#2b2b2b" stroke="#2b2b2b" stroke-width="0.14">Sn:La</text><text transform="translate(848.2 838.9) scale(0.97 1.16)" fill="#9a3038" stroke="#9a3038" stroke-width="0.14">Ti:Kb</text><text transform="translate(791.9 857.8) scale(0.97 1.16)" fill="#2b2b2b" stroke="#2b2b2b" stroke-width="0.14">Pa:Mb</text><text transform="translate(834.5 857.8) scale(0.97 1.16)" fill="#9a3038" stroke="#9a3038" stroke-width="0.14">Ti:Ka</text><text transform="translate(757.1 867.2) scale(0.97 1.16)" fill="#2b2b2b" stroke="#2b2b2b" stroke-width="0.14">Zr:Lb</text><text transform="translate(800.0 876.6) scale(0.97 1.16)" fill="#3a32ff" stroke="#3a32ff" stroke-width="0.14">Cr:Ka-E</text><text transform="translate(864.5 876.6) scale(0.97 1.16)" fill="#2b2b2b" stroke="#2b2b2b" stroke-width="0.14">Cr:Ka</text><text transform="translate(752.9 886.1) scale(0.97 1.16)" fill="#2b2b2b" stroke="#2b2b2b" stroke-width="0.14">Zr:La</text><text transform="translate(834.5 895.5) scale(0.97 1.16)" fill="#2b2b2b" stroke="#2b2b2b" stroke-width="0.14">Cs:Lb1</text><text transform="translate(772.0 905.0) scale(0.97 1.16)" fill="#3a32ff" stroke="#3a32ff" stroke-width="0.14">Cs:Lb1-E</text><text transform="translate(897.0 900.4) scale(0.97 1.16)" fill="#2b2b2b" stroke="#2b2b2b" stroke-width="0.14">Fe:Ka</text><text transform="translate(826.4 914.4) scale(0.97 1.16)" fill="#2b2b2b" stroke="#2b2b2b" stroke-width="0.14">Cs:La</text><text transform="translate(971.2 911.8) scale(0.97 1.16)" fill="#3a32ff" stroke="#3a32ff" stroke-width="0.14">Pb:La-E</text><text transform="translate(763.0 923.8) scale(0.97 1.16)" fill="#3a32ff" stroke="#3a32ff" stroke-width="0.14">Cs:La-E</text><text transform="translate(833.6 932.9) scale(0.97 1.16)" fill="#3a32ff" stroke="#3a32ff" stroke-width="0.14">Fe:Ka-E</text><text transform="translate(928.2 934.9) scale(0.97 1.16)" fill="#3a32ff" stroke="#3a32ff" stroke-width="0.14">Ga:Ka-E</text><text transform="translate(992.0 930.6) scale(0.97 1.16)" fill="#2b2b2b" stroke="#2b2b2b" stroke-width="0.14">Ga:Ka</text><text transform="translate(1034.7 933.9) scale(0.97 1.16)" fill="#2b2b2b" stroke="#2b2b2b" stroke-width="0.14">Pb:La</text><text transform="translate(1040.0 892.3) scale(0.97 1.16)" fill="#3a32ff" stroke="#3a32ff" stroke-width="0.14">Pb:Lb-E</text><text transform="translate(1103.5 892.3) scale(0.97 1.16)" fill="#2b2b2b" stroke="#2b2b2b" stroke-width="0.14">Pb:Lb</text><text transform="translate(1051.5 873.4) scale(0.97 1.16)" fill="#3a32ff" stroke="#3a32ff" stroke-width="0.14">Th:La-E</text><text transform="translate(1075.9 854.9) scale(0.97 1.16)" fill="#3a32ff" stroke="#3a32ff" stroke-width="0.14">U:La-E</text><text transform="translate(1120.5 857.8) scale(0.97 1.16)" fill="#3a32ff" stroke="#3a32ff" stroke-width="0.14">Y:Ka-E</text><text transform="translate(1062.0 910.8) scale(0.97 1.16)" fill="#3a32ff" stroke="#3a32ff" stroke-width="0.14">Pa:La-E</text><text transform="translate(1115.2 910.8) scale(0.97 1.16)" fill="#2b2b2b" stroke="#2b2b2b" stroke-width="0.14">Th:La</text><text transform="translate(1091.5 929.4) scale(0.97 1.16)" fill="#3a32ff" stroke="#3a32ff" stroke-width="0.14">Sr:Ka-E</text><text transform="translate(1125.2 876.6) scale(0.97 1.16)" fill="#2b2b2b" stroke="#2b2b2b" stroke-width="0.14">Pa:La</text><text transform="translate(1265.1 783.6) scale(0.97 1.16)" fill="#9a3038" stroke="#9a3038" stroke-width="0.14">Mo:Ka</text><text transform="translate(1200.4 798.6) scale(0.97 1.16)" fill="#b03ab4" stroke="#b03ab4" stroke-width="0.14">Mo:Ka-E</text><text transform="translate(1139.2 817.5) scale(0.97 1.16)" fill="#2b2b2b" stroke="#2b2b2b" stroke-width="0.14">U:La</text><text transform="translate(1194.2 817.5) scale(0.97 1.16)" fill="#3a32ff" stroke="#3a32ff" stroke-width="0.14">U:Lb1-E</text><text transform="translate(1157.1 836.0) scale(0.97 1.16)" fill="#3a32ff" stroke="#3a32ff" stroke-width="0.14">Th:Lb1-E</text><text transform="translate(1257.0 836.0) scale(0.97 1.16)" fill="#2b2b2b" stroke="#2b2b2b" stroke-width="0.14">U:Lb1</text><text transform="translate(1184.1 854.9) scale(0.97 1.16)" fill="#2b2b2b" stroke="#2b2b2b" stroke-width="0.14">Y:Ka</text><text transform="translate(1220.6 854.9) scale(0.97 1.16)" fill="#2b2b2b" stroke="#2b2b2b" stroke-width="0.14">Th:Lb1</text><text transform="translate(1272.6 854.9) scale(0.97 1.16)" fill="#b03ab4" stroke="#b03ab4" stroke-width="0.14">Mo:Kb-E</text><text transform="translate(1173.4 873.4) scale(0.97 1.16)" fill="#3a32ff" stroke="#3a32ff" stroke-width="0.14">Pa:Lb1-E</text><text transform="translate(1236.8 873.4) scale(0.97 1.16)" fill="#2b2b2b" stroke="#2b2b2b" stroke-width="0.14">Pa:Lb1</text><text transform="translate(1144.8 895.5) scale(0.97 1.16)" fill="#3a32ff" stroke="#3a32ff" stroke-width="0.14">Zr:Ka-E</text><text transform="translate(1208.2 892.3) scale(0.97 1.16)" fill="#2b2b2b" stroke="#2b2b2b" stroke-width="0.14">Zr:Ka</text><text transform="translate(1154.8 914.4) scale(0.97 1.16)" fill="#2b2b2b" stroke="#2b2b2b" stroke-width="0.14">Sr:Ka</text><text transform="translate(1344.8 822.3) scale(0.97 1.16)" fill="#9a3038" stroke="#9a3038" stroke-width="0.14">Mo:Kb2</text><text transform="translate(1336.7 841.5) scale(0.97 1.16)" fill="#9a3038" stroke="#9a3038" stroke-width="0.14">Mo:Kb</text><text transform="translate(1515.3 837.6) scale(0.97 1.16)" fill="#2b2b2b" stroke="#2b2b2b" stroke-width="0.14">Sn:Ka2</text><text transform="translate(1522.1 856.5) scale(0.97 1.16)" fill="#2b2b2b" stroke="#2b2b2b" stroke-width="0.14">Sn:Ka1</text><text transform="translate(1699.1 880.6) scale(0.97 1.16)" fill="#2b2b2b" stroke="#2b2b2b" stroke-width="0.14">Cs:Ka2</text><text transform="translate(1711.5 899.4) scale(0.97 1.16)" fill="#2b2b2b" stroke="#2b2b2b" stroke-width="0.14">Cs:Ka1</text></g><path d="M1736.3 760.9 H1778.3" stroke="#fb7fec" stroke-width="2.3"/><path d="M1736.3 783.9 H1778.3" stroke="#98d4cc" stroke-width="2.3"/></svg>
<div class="t" style="left:680.89px;top:941.00px;font-size:11.6px;letter-spacing:0.344px;color:#262626;line-height:12px;">0.0</div>
<div class="t" style="left:680.89px;top:920.00px;font-size:11.6px;letter-spacing:0.373px;color:#262626;line-height:12px;">0.5</div>
<div class="t" style="left:680.43px;top:899.00px;font-size:11.6px;letter-spacing:0.576px;color:#262626;line-height:12px;">1.0</div>
<div class="t" style="left:680.43px;top:878.00px;font-size:11.6px;letter-spacing:0.605px;color:#262626;line-height:12px;">1.5</div>
<div class="t" style="left:680.72px;top:857.00px;font-size:11.6px;letter-spacing:0.431px;color:#262626;line-height:12px;">2.0</div>
<div class="t" style="left:680.72px;top:837.00px;font-size:11.6px;letter-spacing:0.460px;color:#262626;line-height:12px;">2.5</div>
<div class="t" style="left:680.89px;top:816.00px;font-size:11.6px;letter-spacing:0.344px;color:#262626;line-height:12px;">3.0</div>
<div class="t" style="left:680.89px;top:795.00px;font-size:11.6px;letter-spacing:0.373px;color:#262626;line-height:12px;">3.5</div>
<div class="t" style="left:681.07px;top:774.00px;font-size:11.6px;letter-spacing:0.257px;color:#262626;line-height:12px;">4.0</div>
<div class="t" style="left:681.07px;top:753.00px;font-size:11.6px;letter-spacing:0.286px;color:#262626;line-height:12px;">4.5</div>
<div class="t" style="left:856.39px;top:957.00px;font-size:11.6px;letter-spacing:-0.277px;color:#262626;line-height:12px;">5.0</div>
<div class="t" style="left:1018.63px;top:957.00px;font-size:11.6px;letter-spacing:0.171px;color:#262626;line-height:12px;">10.0</div>
<div class="t" style="left:1184.83px;top:957.00px;font-size:11.6px;letter-spacing:0.171px;color:#262626;line-height:12px;">15.0</div>
<div class="t" style="left:1351.32px;top:957.00px;font-size:11.6px;letter-spacing:0.075px;color:#262626;line-height:12px;">20.0</div>
<div class="t" style="left:1517.52px;top:957.00px;font-size:11.6px;letter-spacing:0.075px;color:#262626;line-height:12px;">25.0</div>
<div class="t" style="left:1683.89px;top:957.00px;font-size:11.6px;letter-spacing:0.017px;color:#262626;line-height:12px;">30.0</div>
<div class="t" style="left:1850.09px;top:957.00px;font-size:11.6px;letter-spacing:0.017px;color:#262626;line-height:12px;">35.0</div>
<div class="t" style="left:1275.76px;top:974.00px;font-size:13px;letter-spacing:0.054px;color:#262626;line-height:15px;">Energy/KeV</div>
<div class="t" style="left:668.8px;top:843.5px;width:0;height:0;transform:rotate(-90deg);transform-origin:0 0;color:#262626"><div class="t" style="left:-44.3px;top:-6.5px;font-size:13px;letter-spacing:0.2px">CountRate/cps</div></div>
<div class="t" style="left:1364.70px;top:721.00px;font-size:12px;letter-spacing:0.451px;color:#a3a09f;line-height:14px;">19.876,4.899</div>
<div class="t" style="left:712.43px;top:753.00px;font-size:14.6px;letter-spacing:-0.061px;color:#ff2020;line-height:16px;white-space:pre;-webkit-text-stroke:0.35px;">High Volt: 45.03kV &nbsp;Current: 601.07uA &nbsp;CPS: 19867 &nbsp;Time: 60s</div>
<div class="t" style="left:1787.24px;top:753.00px;font-size:14.5px;letter-spacing:0.138px;color:#1c1c1c;line-height:16px;">Fitted Spectrum</div>
<div class="t" style="left:1787.74px;top:775.00px;font-size:14.5px;letter-spacing:-0.100px;color:#1c1c1c;line-height:16px;">Focus Component</div>
<div class="abs" style="left:649.8px;top:1009.3px;width:70.8px;height:25.4px;background:#fff;border:1px solid #d2d2d2;border-bottom-color:#bdbdbd;border-radius:3px"></div>
<div class="t" style="left:653.14px;top:1015.00px;font-size:13.2px;letter-spacing:0.213px;color:#1a1a1a;line-height:15px;">Default</div>
<svg style="left:706px;top:1017px" width="12" height="10" viewBox="0 0 12 10"><path d="M1.6 2.6 L6 7 L10.4 2.6" fill="none" stroke="#6a6a6a" stroke-width="1.2"/></svg>
<div class="abs" style="left:746.5px;top:1015.5px;width:13px;height:13px;background:#0b60c6;border-radius:2.5px"></div><svg style="left:746.5px;top:1015.5px" width="13" height="13" viewBox="0 0 13 13"><path d="M3.2 6.6 L5.5 8.8 L9.8 4.4" fill="none" stroke="#e8f0fb" stroke-width="1.05"/></svg><div class="t" style="left:762.33px;top:1015.00px;font-size:13.4px;letter-spacing:0.124px;color:#1a1a1a;line-height:15px;">Peak Ident</div>
<div class="abs" style="left:840.1px;top:1015.5px;width:13px;height:13px;background:#f1f1f1;border:1.3px solid #8a8a8a;border-radius:3px"></div><div class="t" style="left:856.13px;top:1015.00px;font-size:13.4px;letter-spacing:0.126px;color:#1a1a1a;line-height:15px;">Ele Ident</div>
<div class="abs" style="left:925.8px;top:1015.5px;width:13px;height:13px;background:#0b60c6;border-radius:2.5px"></div><svg style="left:925.8px;top:1015.5px" width="13" height="13" viewBox="0 0 13 13"><path d="M3.2 6.6 L5.5 8.8 L9.8 4.4" fill="none" stroke="#e8f0fb" stroke-width="1.05"/></svg><div class="t" style="left:942.00px;top:1015.00px;font-size:13.4px;letter-spacing:0.219px;color:#1a1a1a;line-height:15px;">Smoothing</div>
<div class="abs" style="left:1026.7px;top:1015.5px;width:13px;height:13px;background:#f1f1f1;border:1.3px solid #8a8a8a;border-radius:3px"></div><div class="t" style="left:1043.13px;top:1015.00px;font-size:13.4px;letter-spacing:0.380px;color:#1a1a1a;line-height:15px;">Histogram</div>
<div class="abs" style="left:1125.6px;top:1015.5px;width:13px;height:13px;background:#f1f1f1;border:1.3px solid #8a8a8a;border-radius:3px"></div><div class="t" style="left:1142.40px;top:1015.00px;font-size:13.4px;letter-spacing:0.058px;color:#1a1a1a;line-height:15px;">AgResolution</div>
<div class="abs" style="left:1847.3px;top:1008.6px;width:46.0px;height:27.3px;background:#ffa800;border-radius:1px;box-shadow:0 0 0 1.6px #e6e8ee, 0 2px 2px rgba(120,130,150,.35)"></div>
<div class="abs" style="left:1901.2px;top:1008.6px;width:27.3px;height:27.3px;background:#ffa800;border-radius:1px;box-shadow:0 0 0 1.6px #e6e8ee, 0 2px 2px rgba(120,130,150,.35)"></div>
<div class="abs" style="left:1847.3px;top:1008.6px;width:46px;height:27.3px;overflow:hidden"><div class="t" style="left:-0.8px;top:7.4px;font-size:13px;letter-spacing:-0.25px;color:#fff">Refers..</div></div>
<div class="t" style="left:1910.71px;top:1015.00px;font-size:13px;color:#fff;line-height:15px;">&lt;</div>

</body></html>
